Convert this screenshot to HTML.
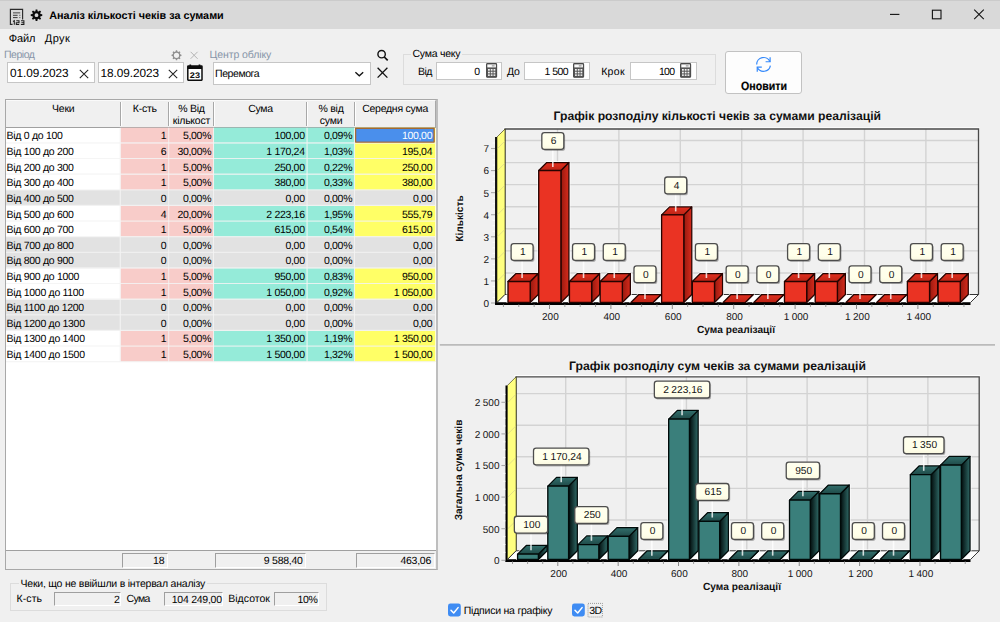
<!DOCTYPE html>
<html><head><meta charset="utf-8"><title>Аналіз кількості чеків за сумами</title>
<style>
html,body{margin:0;padding:0}
body{width:1000px;height:622px;overflow:hidden;position:relative;background:#f0f0f0;font-family:"Liberation Sans", sans-serif;font-size:10.5px;color:#000;letter-spacing:-0.25px;text-rendering:geometricPrecision}
div,span{position:absolute;box-sizing:content-box;white-space:nowrap}
text{text-rendering:geometricPrecision}
.tk{font-family:"Liberation Sans", sans-serif;font-size:10px;fill:#151515;letter-spacing:0;word-spacing:-0.35px}
.ct{font-family:"Liberation Sans", sans-serif;font-size:12.2px;font-weight:bold;fill:#111;letter-spacing:0}
.at{font-family:"Liberation Sans", sans-serif;font-size:10.3px;font-weight:bold;fill:#111;letter-spacing:0}
#tb{left:0;top:0;width:1000px;height:28.7px;background:#d9d9d9}
.c{line-height:14.8px;height:14.8px;overflow:hidden;letter-spacing:-0.3px}
.c.l{text-indent:0.6px}
.c.r{text-align:right;padding-right:2.6px;box-sizing:border-box}
.c.r6{padding-right:3.1px}
.h{top:101.6px;height:26px;text-align:center;line-height:12.4px;padding-top:1px}
.hs{top:101.5px;width:1px;height:24.5px;background:#a8a8a8;box-shadow:1px 0 0 #fff}
.lab{color:#808a94}
.fld{background:#fff;border:1px solid #c6c6c6;box-sizing:border-box}
.sunk{background:#f0f0f0;border:1px solid;border-color:#9f9f9f #fff #fff #9f9f9f;box-sizing:border-box;text-align:right}
.gb{border:1px solid #dcdcdc;box-sizing:border-box}
.gbt{background:#f0f0f0;padding:0 2px}
</style></head><body>
<div id="tb"></div>
<div style="left:0;top:0;width:1000px;height:1px;background:#cbcbcb"></div>
<!-- title icons -->
<svg style="position:absolute;left:0;top:0" width="50" height="29" viewBox="0 0 50 29">
 <path d="M12.6 24.4H10.4V9.4H22.6V19.4" fill="none" stroke="#2a2a2a" stroke-width="1.15"/>
 <path d="M13 12.8h7.2" stroke="#777" stroke-width="1.5"/>
 <path d="M13 15.3h4.6M19.4 15.3h0.9M13 17.6h4.6M19.4 17.6h0.9" stroke="#333" stroke-width="0.95"/>
 <g fill="none" stroke="#1c1c1c" stroke-width="1.05">
  <path d="M13 21.5l1.3-0.8v4.1"/>
  <path d="M16.3 20.8h2.7v1.9h-2.7v1.9h2.9"/>
  <path d="M21 20.8h2.9v3.8h-3M21.4 22.7h2.5"/>
 </g>
 <path transform="translate(36.5,15.2) rotate(0)" d="M4.06 -1.09L5.74 -0.86L5.74 0.86L4.06 1.09L3.64 2.10L4.66 3.45L3.45 4.66L2.10 3.64L1.09 4.06L0.86 5.74L-0.86 5.74L-1.09 4.06L-2.10 3.64L-3.45 4.66L-4.66 3.45L-3.64 2.10L-4.06 1.09L-5.74 0.86L-5.74 -0.86L-4.06 -1.09L-3.64 -2.10L-4.66 -3.45L-3.45 -4.66L-2.10 -3.64L-1.09 -4.06L-0.86 -5.74L0.86 -5.74L1.09 -4.06L2.10 -3.64L3.45 -4.66L4.66 -3.45L3.64 -2.10ZM1.90 0A1.90 1.90 0 1 0 -1.90 0A1.90 1.90 0 1 0 1.90 0Z" fill="#0c0c0c" fill-rule="evenodd"/>
</svg>
<span style="top:10.2px;font-size:10.8px;line-height:13px;letter-spacing:0.004px;left:49.3px;font-weight:bold;">Аналіз кількості чеків за сумами</span>
<!-- window buttons -->
<svg style="position:absolute;left:880px;top:4px" width="115" height="22" viewBox="0 0 115 22">
 <path d="M10 10.4h9.4" stroke="#111" stroke-width="1.1"/>
 <rect x="52.4" y="6.2" width="8.6" height="8.6" fill="none" stroke="#111" stroke-width="1.1"/>
 <path d="M94.2 5.6l9.6 9.6M103.8 5.6l-9.6 9.6" stroke="#111" stroke-width="1.05"/>
</svg>
<!-- menu -->
<span style="top:31.7px;font-size:11px;line-height:14px;letter-spacing:-0.111px;left:8.7px;">Файл</span>
<span style="top:31.7px;font-size:11px;line-height:14px;letter-spacing:0.436px;left:44.8px;">Друк</span>
<!-- period -->
<span style="top:49.1px;font-size:10.5px;line-height:13px;letter-spacing:-0.466px;left:4px;color:#8795a8;">Період</span>
<svg style="position:absolute;left:170px;top:49px" width="32" height="13" viewBox="0 0 32 13">
 <path transform="translate(6.5,6.3) rotate(0)" d="M3.78 -0.94L4.96 -0.61L4.96 0.61L3.78 0.94L3.34 2.01L3.94 3.08L3.08 3.94L2.01 3.34L0.94 3.78L0.61 4.96L-0.61 4.96L-0.94 3.78L-2.01 3.34L-3.08 3.94L-3.94 3.08L-3.34 2.01L-3.78 0.94L-4.96 0.61L-4.96 -0.61L-3.78 -0.94L-3.34 -2.01L-3.94 -3.08L-3.08 -3.94L-2.01 -3.34L-0.94 -3.78L-0.61 -4.96L0.61 -4.96L0.94 -3.78L2.01 -3.34L3.08 -3.94L3.94 -3.08L3.34 -2.01ZM2.60 0A2.60 2.60 0 1 0 -2.60 0A2.60 2.60 0 1 0 2.60 0Z" fill="#8f8f8f" fill-rule="evenodd"/>
 <path d="M20.6 2.8l7 7M27.6 2.8l-7 7" stroke="#b4b4b4" stroke-width="1"/>
</svg>
<div class="fld" style="left:6.6px;top:62.2px;width:88px;height:21.3px"></div>
<span style="top:66.4px;font-size:11.8px;line-height:14px;letter-spacing:-0.056px;left:10px;">01.09.2023</span>
<div class="fld" style="left:97.5px;top:62.2px;width:86.2px;height:21.3px"></div>
<span style="top:66.4px;font-size:11.8px;line-height:14px;letter-spacing:-0.056px;left:100.6px;">18.09.2023</span>
<svg style="position:absolute;left:78px;top:68px" width="102" height="12" viewBox="0 0 102 12">
 <path d="M1.8 1.8l8.4 8.4M10.2 1.8l-8.4 8.4" stroke="#222" stroke-width="1.05"/>
 <path d="M90.8 1.8l8.4 8.4M99.2 1.8l-8.4 8.4" stroke="#222" stroke-width="1.05"/>
</svg>
<!-- calendar icon -->
<svg style="position:absolute;left:186px;top:63px" width="18" height="20" viewBox="0 0 18 20">
 <rect x="1.8" y="3" width="14.2" height="14.2" rx="0.4" fill="#fff" stroke="#0d0d0d" stroke-width="1.5"/>
 <rect x="1.8" y="3" width="14.2" height="3" fill="#0d0d0d"/>
 <path d="M4.3 1.4v2M13.5 1.4v2" stroke="#0d0d0d" stroke-width="1.7"/>
 <text x="3.8" y="14.7" font-family='"Liberation Sans", sans-serif' font-size="8.1" font-weight="bold" fill="#0d0d0d" letter-spacing="0" textLength="10.2" lengthAdjust="spacingAndGlyphs" style="-webkit-text-stroke:0.2px #000">23</text>
</svg>
<!-- centre -->
<span style="top:49.1px;font-size:10.5px;line-height:13px;letter-spacing:-0.098px;left:209.6px;color:#8795a8;">Центр обліку</span>
<div class="fld" style="left:212.6px;top:62px;width:158px;height:23px"></div>
<span style="top:67.9px;font-size:10.5px;line-height:13px;letter-spacing:-0.433px;left:215.1px;">Перемога</span>
<svg style="position:absolute;left:352px;top:47px" width="40" height="34" viewBox="0 0 40 34">
 <path d="M3.4 25.2l3.9 3.6 3.9-3.6" fill="none" stroke="#111" stroke-width="1.3"/>
 <circle cx="29.6" cy="7.2" r="3.7" fill="none" stroke="#111" stroke-width="1.4"/>
 <path d="M32.3 10l3.4 3.4" stroke="#111" stroke-width="1.7"/>
 <path d="M25.6 20.8l9.8 9.8M35.4 20.8l-9.8 9.8" stroke="#111" stroke-width="1.3"/>
</svg>
<!-- sum group -->
<div class="gb" style="left:402.5px;top:54px;width:313.5px;height:30.5px"></div>
<span style="top:48.1px;font-size:10.5px;line-height:13px;letter-spacing:-0.251px;left:410.5px;background:#f0f0f0;padding:0 2px;">Сума чеку</span>
<span style="top:65.5px;font-size:10.5px;line-height:13px;letter-spacing:-0.488px;left:418px;">Від</span>
<div class="fld" style="left:436.4px;top:61.6px;width:66px;height:18px"></div>
<span style="top:65.5px;font-size:10.5px;line-height:13px;letter-spacing:0.000px;right:519.8px;">0</span>
<span style="top:65.5px;font-size:10.5px;line-height:13px;letter-spacing:-0.234px;left:507px;">До</span>
<div class="fld" style="left:524px;top:61.6px;width:66.4px;height:18px"></div>
<span style="top:65.5px;font-size:10.5px;line-height:13px;letter-spacing:-0.495px;right:431.8px;">1 500</span>
<span style="top:65.5px;font-size:10.5px;line-height:13px;letter-spacing:0.303px;left:601.2px;">Крок</span>
<div class="fld" style="left:630px;top:61.6px;width:66.7px;height:18px"></div>
<span style="top:65.5px;font-size:10.5px;line-height:13px;letter-spacing:-0.773px;right:325.8px;">100</span>

<svg style="position:absolute;left:485.5px;top:62.8px" width="12" height="16"><g><rect x="0.6" y="0.6" width="10" height="13.6" rx="0.8" fill="#555" stroke="#4a4a4a" stroke-width="1.1"/>
 <rect x="1.3" y="1.4" width="8.6" height="3" fill="#fbfbfb"/>
 <path d="M5.8 2.9h2.8" stroke="#666" stroke-width="0.8"/>
 <g fill="#f2f2f2">
 <rect x="2" y="6" width="1.8" height="1.7"/><rect x="4.75" y="6" width="1.8" height="1.7"/><rect x="7.5" y="6" width="1.8" height="1.7"/>
 <rect x="2" y="8.7" width="1.8" height="1.7"/><rect x="4.75" y="8.7" width="1.8" height="1.7"/><rect x="7.5" y="8.7" width="1.8" height="1.7"/>
 <rect x="2" y="11.4" width="1.8" height="1.5"/><rect x="4.75" y="11.4" width="1.8" height="1.5"/><rect x="7.5" y="11.4" width="1.8" height="1.5"/>
 </g></g></svg>
<svg style="position:absolute;left:573px;top:62.8px" width="12" height="16"><g><rect x="0.6" y="0.6" width="10" height="13.6" rx="0.8" fill="#555" stroke="#4a4a4a" stroke-width="1.1"/>
 <rect x="1.3" y="1.4" width="8.6" height="3" fill="#fbfbfb"/>
 <path d="M5.8 2.9h2.8" stroke="#666" stroke-width="0.8"/>
 <g fill="#f2f2f2">
 <rect x="2" y="6" width="1.8" height="1.7"/><rect x="4.75" y="6" width="1.8" height="1.7"/><rect x="7.5" y="6" width="1.8" height="1.7"/>
 <rect x="2" y="8.7" width="1.8" height="1.7"/><rect x="4.75" y="8.7" width="1.8" height="1.7"/><rect x="7.5" y="8.7" width="1.8" height="1.7"/>
 <rect x="2" y="11.4" width="1.8" height="1.5"/><rect x="4.75" y="11.4" width="1.8" height="1.5"/><rect x="7.5" y="11.4" width="1.8" height="1.5"/>
 </g></g></svg>
<svg style="position:absolute;left:679.6px;top:62.8px" width="12" height="16"><g><rect x="0.6" y="0.6" width="10" height="13.6" rx="0.8" fill="#555" stroke="#4a4a4a" stroke-width="1.1"/>
 <rect x="1.3" y="1.4" width="8.6" height="3" fill="#fbfbfb"/>
 <path d="M5.8 2.9h2.8" stroke="#666" stroke-width="0.8"/>
 <g fill="#f2f2f2">
 <rect x="2" y="6" width="1.8" height="1.7"/><rect x="4.75" y="6" width="1.8" height="1.7"/><rect x="7.5" y="6" width="1.8" height="1.7"/>
 <rect x="2" y="8.7" width="1.8" height="1.7"/><rect x="4.75" y="8.7" width="1.8" height="1.7"/><rect x="7.5" y="8.7" width="1.8" height="1.7"/>
 <rect x="2" y="11.4" width="1.8" height="1.5"/><rect x="4.75" y="11.4" width="1.8" height="1.5"/><rect x="7.5" y="11.4" width="1.8" height="1.5"/>
 </g></g></svg>
<!-- button -->
<div style="left:725.3px;top:51.3px;width:76.3px;height:42.6px;background:#fdfdfd;border:1px solid #c2c2c2;border-radius:3px;box-sizing:border-box"></div>
<svg style="position:absolute;left:754px;top:55px" width="20" height="20" viewBox="0 0 20 20">
 <g fill="none" stroke="#3489fb" stroke-width="1.2" stroke-linecap="butt" stroke-linejoin="miter">
  <path d="M2.7 9.6A6.9 6.9 0 0 1 15.95 6.7"/>
  <path d="M16.1 2.3V6.75H11.6"/>
  <path d="M16.4 10.6A6.9 6.9 0 0 1 3.3 12.2"/>
  <path d="M3.25 16.7V12.2H7.8"/>
 </g>
</svg>
<span style="top:78.9px;font-size:12px;line-height:14px;letter-spacing:0.000px;left:741px;font-weight:bold;transform:scaleX(0.885);transform-origin:0 0;-webkit-text-stroke:0.2px #000;">Оновити</span>

<!-- grid -->
<div style="left:5px;top:99.3px;width:433.4px;height:470.4px;background:#fff;border:1px solid #a8a8a8;border-right:2px solid #bebebe;box-sizing:border-box"></div>
<div style="left:6px;top:100.3px;width:429.4px;height:25.6px;background:#f0f0f0;border-top:1px solid #fafafa;border-bottom:1px solid #a0a0a0;border-right:1px solid #a8a8a8"></div>
<div class="h" style="left:6px;width:114.5px">Чеки</div>
<div class="h" style="left:120.5px;width:48.5px">К-сть</div>
<div class="hs" style="left:119.5px"></div>
<div class="h" style="left:169px;width:44.8px">% Від<br>кількост</div>
<div class="hs" style="left:168px"></div>
<div class="h" style="left:213.8px;width:93.5px">Сума</div>
<div class="hs" style="left:212.8px"></div>
<div class="h" style="left:307.3px;width:47.5px">% від<br>суми</div>
<div class="hs" style="left:306.3px"></div>
<div class="h" style="left:354.8px;width:80.5px">Середня сума</div>
<div class="hs" style="left:353.8px"></div>
<svg style="position:absolute;left:0;top:0" width="440" height="380" viewBox="0 0 440 380">
<rect x="120.5" y="127.7" width="48.5" height="15.62" fill="#f8ccc9"/>
<rect x="169" y="127.7" width="44.8" height="15.62" fill="#f8ccc9"/>
<rect x="213.8" y="127.7" width="93.5" height="15.62" fill="#95ebd9"/>
<rect x="307.3" y="127.7" width="47.5" height="15.62" fill="#95ebd9"/>
<rect x="354.8" y="127.7" width="80.5" height="15.62" fill="#ffff66"/>
<rect x="355.7" y="128.4" width="78.3" height="13.72" fill="#4a8fec" stroke="#a9672b" stroke-width="1.05"/>
<rect x="120.5" y="143.32" width="48.5" height="15.62" fill="#f8ccc9"/>
<rect x="169" y="143.32" width="44.8" height="15.62" fill="#f8ccc9"/>
<rect x="213.8" y="143.32" width="93.5" height="15.62" fill="#95ebd9"/>
<rect x="307.3" y="143.32" width="47.5" height="15.62" fill="#95ebd9"/>
<rect x="354.8" y="143.32" width="80.5" height="15.62" fill="#ffff66"/>
<rect x="120.5" y="158.94" width="48.5" height="15.62" fill="#f8ccc9"/>
<rect x="169" y="158.94" width="44.8" height="15.62" fill="#f8ccc9"/>
<rect x="213.8" y="158.94" width="93.5" height="15.62" fill="#95ebd9"/>
<rect x="307.3" y="158.94" width="47.5" height="15.62" fill="#95ebd9"/>
<rect x="354.8" y="158.94" width="80.5" height="15.62" fill="#ffff66"/>
<rect x="120.5" y="174.56" width="48.5" height="15.62" fill="#f8ccc9"/>
<rect x="169" y="174.56" width="44.8" height="15.62" fill="#f8ccc9"/>
<rect x="213.8" y="174.56" width="93.5" height="15.62" fill="#95ebd9"/>
<rect x="307.3" y="174.56" width="47.5" height="15.62" fill="#95ebd9"/>
<rect x="354.8" y="174.56" width="80.5" height="15.62" fill="#ffff66"/>
<rect x="6" y="190.18" width="114.5" height="15.62" fill="#e2e2e2"/>
<rect x="120.5" y="190.18" width="48.5" height="15.62" fill="#e2e2e2"/>
<rect x="169" y="190.18" width="44.8" height="15.62" fill="#e2e2e2"/>
<rect x="213.8" y="190.18" width="93.5" height="15.62" fill="#e2e2e2"/>
<rect x="307.3" y="190.18" width="47.5" height="15.62" fill="#e2e2e2"/>
<rect x="354.8" y="190.18" width="80.5" height="15.62" fill="#e2e2e2"/>
<rect x="120.5" y="205.8" width="48.5" height="15.62" fill="#f8ccc9"/>
<rect x="169" y="205.8" width="44.8" height="15.62" fill="#f8ccc9"/>
<rect x="213.8" y="205.8" width="93.5" height="15.62" fill="#95ebd9"/>
<rect x="307.3" y="205.8" width="47.5" height="15.62" fill="#95ebd9"/>
<rect x="354.8" y="205.8" width="80.5" height="15.62" fill="#ffff66"/>
<rect x="120.5" y="221.42" width="48.5" height="15.62" fill="#f8ccc9"/>
<rect x="169" y="221.42" width="44.8" height="15.62" fill="#f8ccc9"/>
<rect x="213.8" y="221.42" width="93.5" height="15.62" fill="#95ebd9"/>
<rect x="307.3" y="221.42" width="47.5" height="15.62" fill="#95ebd9"/>
<rect x="354.8" y="221.42" width="80.5" height="15.62" fill="#ffff66"/>
<rect x="6" y="237.04" width="114.5" height="15.62" fill="#e2e2e2"/>
<rect x="120.5" y="237.04" width="48.5" height="15.62" fill="#e2e2e2"/>
<rect x="169" y="237.04" width="44.8" height="15.62" fill="#e2e2e2"/>
<rect x="213.8" y="237.04" width="93.5" height="15.62" fill="#e2e2e2"/>
<rect x="307.3" y="237.04" width="47.5" height="15.62" fill="#e2e2e2"/>
<rect x="354.8" y="237.04" width="80.5" height="15.62" fill="#e2e2e2"/>
<rect x="6" y="252.66" width="114.5" height="15.62" fill="#e2e2e2"/>
<rect x="120.5" y="252.66" width="48.5" height="15.62" fill="#e2e2e2"/>
<rect x="169" y="252.66" width="44.8" height="15.62" fill="#e2e2e2"/>
<rect x="213.8" y="252.66" width="93.5" height="15.62" fill="#e2e2e2"/>
<rect x="307.3" y="252.66" width="47.5" height="15.62" fill="#e2e2e2"/>
<rect x="354.8" y="252.66" width="80.5" height="15.62" fill="#e2e2e2"/>
<rect x="120.5" y="268.28" width="48.5" height="15.62" fill="#f8ccc9"/>
<rect x="169" y="268.28" width="44.8" height="15.62" fill="#f8ccc9"/>
<rect x="213.8" y="268.28" width="93.5" height="15.62" fill="#95ebd9"/>
<rect x="307.3" y="268.28" width="47.5" height="15.62" fill="#95ebd9"/>
<rect x="354.8" y="268.28" width="80.5" height="15.62" fill="#ffff66"/>
<rect x="120.5" y="283.9" width="48.5" height="15.62" fill="#f8ccc9"/>
<rect x="169" y="283.9" width="44.8" height="15.62" fill="#f8ccc9"/>
<rect x="213.8" y="283.9" width="93.5" height="15.62" fill="#95ebd9"/>
<rect x="307.3" y="283.9" width="47.5" height="15.62" fill="#95ebd9"/>
<rect x="354.8" y="283.9" width="80.5" height="15.62" fill="#ffff66"/>
<rect x="6" y="299.52" width="114.5" height="15.62" fill="#e2e2e2"/>
<rect x="120.5" y="299.52" width="48.5" height="15.62" fill="#e2e2e2"/>
<rect x="169" y="299.52" width="44.8" height="15.62" fill="#e2e2e2"/>
<rect x="213.8" y="299.52" width="93.5" height="15.62" fill="#e2e2e2"/>
<rect x="307.3" y="299.52" width="47.5" height="15.62" fill="#e2e2e2"/>
<rect x="354.8" y="299.52" width="80.5" height="15.62" fill="#e2e2e2"/>
<rect x="6" y="315.14" width="114.5" height="15.62" fill="#e2e2e2"/>
<rect x="120.5" y="315.14" width="48.5" height="15.62" fill="#e2e2e2"/>
<rect x="169" y="315.14" width="44.8" height="15.62" fill="#e2e2e2"/>
<rect x="213.8" y="315.14" width="93.5" height="15.62" fill="#e2e2e2"/>
<rect x="307.3" y="315.14" width="47.5" height="15.62" fill="#e2e2e2"/>
<rect x="354.8" y="315.14" width="80.5" height="15.62" fill="#e2e2e2"/>
<rect x="120.5" y="330.76" width="48.5" height="15.62" fill="#f8ccc9"/>
<rect x="169" y="330.76" width="44.8" height="15.62" fill="#f8ccc9"/>
<rect x="213.8" y="330.76" width="93.5" height="15.62" fill="#95ebd9"/>
<rect x="307.3" y="330.76" width="47.5" height="15.62" fill="#95ebd9"/>
<rect x="354.8" y="330.76" width="80.5" height="15.62" fill="#ffff66"/>
<rect x="120.5" y="346.38" width="48.5" height="15.62" fill="#f8ccc9"/>
<rect x="169" y="346.38" width="44.8" height="15.62" fill="#f8ccc9"/>
<rect x="213.8" y="346.38" width="93.5" height="15.62" fill="#95ebd9"/>
<rect x="307.3" y="346.38" width="47.5" height="15.62" fill="#95ebd9"/>
<rect x="354.8" y="346.38" width="80.5" height="15.62" fill="#ffff66"/>
<line x1="6" y1="142.92" x2="435.3" y2="142.92" stroke="#f4f4f4" stroke-width="1.1" opacity="0.85"/>
<line x1="6" y1="158.54" x2="435.3" y2="158.54" stroke="#f4f4f4" stroke-width="1.1" opacity="0.85"/>
<line x1="6" y1="174.16" x2="435.3" y2="174.16" stroke="#f4f4f4" stroke-width="1.1" opacity="0.85"/>
<line x1="6" y1="189.78" x2="435.3" y2="189.78" stroke="#f4f4f4" stroke-width="1.1" opacity="0.85"/>
<line x1="6" y1="205.4" x2="435.3" y2="205.4" stroke="#f4f4f4" stroke-width="1.1" opacity="0.85"/>
<line x1="6" y1="221.02" x2="435.3" y2="221.02" stroke="#f4f4f4" stroke-width="1.1" opacity="0.85"/>
<line x1="6" y1="236.64" x2="435.3" y2="236.64" stroke="#f4f4f4" stroke-width="1.1" opacity="0.85"/>
<line x1="6" y1="252.26" x2="435.3" y2="252.26" stroke="#f4f4f4" stroke-width="1.1" opacity="0.85"/>
<line x1="6" y1="267.88" x2="435.3" y2="267.88" stroke="#f4f4f4" stroke-width="1.1" opacity="0.85"/>
<line x1="6" y1="283.5" x2="435.3" y2="283.5" stroke="#f4f4f4" stroke-width="1.1" opacity="0.85"/>
<line x1="6" y1="299.12" x2="435.3" y2="299.12" stroke="#f4f4f4" stroke-width="1.1" opacity="0.85"/>
<line x1="6" y1="314.74" x2="435.3" y2="314.74" stroke="#f4f4f4" stroke-width="1.1" opacity="0.85"/>
<line x1="6" y1="330.36" x2="435.3" y2="330.36" stroke="#f4f4f4" stroke-width="1.1" opacity="0.85"/>
<line x1="6" y1="345.98" x2="435.3" y2="345.98" stroke="#f4f4f4" stroke-width="1.1" opacity="0.85"/>
<line x1="6" y1="361.6" x2="435.3" y2="361.6" stroke="#f4f4f4" stroke-width="1.1" opacity="0.85"/>
<line x1="120.2" y1="127.7" x2="120.2" y2="362" stroke="#f4f4f4" stroke-width="1.1" opacity="0.85"/>
<line x1="168.7" y1="127.7" x2="168.7" y2="362" stroke="#f4f4f4" stroke-width="1.1" opacity="0.85"/>
<line x1="213.5" y1="127.7" x2="213.5" y2="362" stroke="#f4f4f4" stroke-width="1.1" opacity="0.85"/>
<line x1="307" y1="127.7" x2="307" y2="362" stroke="#f4f4f4" stroke-width="1.1" opacity="0.85"/>
<line x1="354.5" y1="127.7" x2="354.5" y2="362" stroke="#f4f4f4" stroke-width="1.1" opacity="0.85"/>
<rect x="355.7" y="128.4" width="78.3" height="13.72" fill="#4a8fec" stroke="#a9672b" stroke-width="1.05"/>
</svg>
<div class="c l" style="left:6px;top:129.4px;width:114.5px;">Від 0 до 100</div>
<div class="c r" style="left:120.5px;top:129.4px;width:48.5px;">1</div>
<div class="c r" style="left:169px;top:129.4px;width:44.8px;">5,00%</div>
<div class="c r" style="left:213.8px;top:129.4px;width:93.5px;">100,00</div>
<div class="c r" style="left:307.3px;top:129.4px;width:47.5px;">0,09%</div>
<div class="c r r6" style="left:354.8px;top:129.4px;width:80.5px;color:#fff;">100,00</div>
<div class="c l" style="left:6px;top:145.02px;width:114.5px;">Від 100 до 200</div>
<div class="c r" style="left:120.5px;top:145.02px;width:48.5px;">6</div>
<div class="c r" style="left:169px;top:145.02px;width:44.8px;">30,00%</div>
<div class="c r" style="left:213.8px;top:145.02px;width:93.5px;">1 170,24</div>
<div class="c r" style="left:307.3px;top:145.02px;width:47.5px;">1,03%</div>
<div class="c r r6" style="left:354.8px;top:145.02px;width:80.5px;">195,04</div>
<div class="c l" style="left:6px;top:160.64px;width:114.5px;">Від 200 до 300</div>
<div class="c r" style="left:120.5px;top:160.64px;width:48.5px;">1</div>
<div class="c r" style="left:169px;top:160.64px;width:44.8px;">5,00%</div>
<div class="c r" style="left:213.8px;top:160.64px;width:93.5px;">250,00</div>
<div class="c r" style="left:307.3px;top:160.64px;width:47.5px;">0,22%</div>
<div class="c r r6" style="left:354.8px;top:160.64px;width:80.5px;">250,00</div>
<div class="c l" style="left:6px;top:176.26px;width:114.5px;">Від 300 до 400</div>
<div class="c r" style="left:120.5px;top:176.26px;width:48.5px;">1</div>
<div class="c r" style="left:169px;top:176.26px;width:44.8px;">5,00%</div>
<div class="c r" style="left:213.8px;top:176.26px;width:93.5px;">380,00</div>
<div class="c r" style="left:307.3px;top:176.26px;width:47.5px;">0,33%</div>
<div class="c r r6" style="left:354.8px;top:176.26px;width:80.5px;">380,00</div>
<div class="c l" style="left:6px;top:191.88px;width:114.5px;">Від 400 до 500</div>
<div class="c r" style="left:120.5px;top:191.88px;width:48.5px;">0</div>
<div class="c r" style="left:169px;top:191.88px;width:44.8px;">0,00%</div>
<div class="c r" style="left:213.8px;top:191.88px;width:93.5px;">0,00</div>
<div class="c r" style="left:307.3px;top:191.88px;width:47.5px;">0,00%</div>
<div class="c r r6" style="left:354.8px;top:191.88px;width:80.5px;">0,00</div>
<div class="c l" style="left:6px;top:207.5px;width:114.5px;">Від 500 до 600</div>
<div class="c r" style="left:120.5px;top:207.5px;width:48.5px;">4</div>
<div class="c r" style="left:169px;top:207.5px;width:44.8px;">20,00%</div>
<div class="c r" style="left:213.8px;top:207.5px;width:93.5px;">2 223,16</div>
<div class="c r" style="left:307.3px;top:207.5px;width:47.5px;">1,95%</div>
<div class="c r r6" style="left:354.8px;top:207.5px;width:80.5px;">555,79</div>
<div class="c l" style="left:6px;top:223.12px;width:114.5px;">Від 600 до 700</div>
<div class="c r" style="left:120.5px;top:223.12px;width:48.5px;">1</div>
<div class="c r" style="left:169px;top:223.12px;width:44.8px;">5,00%</div>
<div class="c r" style="left:213.8px;top:223.12px;width:93.5px;">615,00</div>
<div class="c r" style="left:307.3px;top:223.12px;width:47.5px;">0,54%</div>
<div class="c r r6" style="left:354.8px;top:223.12px;width:80.5px;">615,00</div>
<div class="c l" style="left:6px;top:238.74px;width:114.5px;">Від 700 до 800</div>
<div class="c r" style="left:120.5px;top:238.74px;width:48.5px;">0</div>
<div class="c r" style="left:169px;top:238.74px;width:44.8px;">0,00%</div>
<div class="c r" style="left:213.8px;top:238.74px;width:93.5px;">0,00</div>
<div class="c r" style="left:307.3px;top:238.74px;width:47.5px;">0,00%</div>
<div class="c r r6" style="left:354.8px;top:238.74px;width:80.5px;">0,00</div>
<div class="c l" style="left:6px;top:254.36px;width:114.5px;">Від 800 до 900</div>
<div class="c r" style="left:120.5px;top:254.36px;width:48.5px;">0</div>
<div class="c r" style="left:169px;top:254.36px;width:44.8px;">0,00%</div>
<div class="c r" style="left:213.8px;top:254.36px;width:93.5px;">0,00</div>
<div class="c r" style="left:307.3px;top:254.36px;width:47.5px;">0,00%</div>
<div class="c r r6" style="left:354.8px;top:254.36px;width:80.5px;">0,00</div>
<div class="c l" style="left:6px;top:269.98px;width:114.5px;">Від 900 до 1000</div>
<div class="c r" style="left:120.5px;top:269.98px;width:48.5px;">1</div>
<div class="c r" style="left:169px;top:269.98px;width:44.8px;">5,00%</div>
<div class="c r" style="left:213.8px;top:269.98px;width:93.5px;">950,00</div>
<div class="c r" style="left:307.3px;top:269.98px;width:47.5px;">0,83%</div>
<div class="c r r6" style="left:354.8px;top:269.98px;width:80.5px;">950,00</div>
<div class="c l" style="left:6px;top:285.6px;width:114.5px;">Від 1000 до 1100</div>
<div class="c r" style="left:120.5px;top:285.6px;width:48.5px;">1</div>
<div class="c r" style="left:169px;top:285.6px;width:44.8px;">5,00%</div>
<div class="c r" style="left:213.8px;top:285.6px;width:93.5px;">1 050,00</div>
<div class="c r" style="left:307.3px;top:285.6px;width:47.5px;">0,92%</div>
<div class="c r r6" style="left:354.8px;top:285.6px;width:80.5px;">1 050,00</div>
<div class="c l" style="left:6px;top:301.22px;width:114.5px;">Від 1100 до 1200</div>
<div class="c r" style="left:120.5px;top:301.22px;width:48.5px;">0</div>
<div class="c r" style="left:169px;top:301.22px;width:44.8px;">0,00%</div>
<div class="c r" style="left:213.8px;top:301.22px;width:93.5px;">0,00</div>
<div class="c r" style="left:307.3px;top:301.22px;width:47.5px;">0,00%</div>
<div class="c r r6" style="left:354.8px;top:301.22px;width:80.5px;">0,00</div>
<div class="c l" style="left:6px;top:316.84px;width:114.5px;">Від 1200 до 1300</div>
<div class="c r" style="left:120.5px;top:316.84px;width:48.5px;">0</div>
<div class="c r" style="left:169px;top:316.84px;width:44.8px;">0,00%</div>
<div class="c r" style="left:213.8px;top:316.84px;width:93.5px;">0,00</div>
<div class="c r" style="left:307.3px;top:316.84px;width:47.5px;">0,00%</div>
<div class="c r r6" style="left:354.8px;top:316.84px;width:80.5px;">0,00</div>
<div class="c l" style="left:6px;top:332.46px;width:114.5px;">Від 1300 до 1400</div>
<div class="c r" style="left:120.5px;top:332.46px;width:48.5px;">1</div>
<div class="c r" style="left:169px;top:332.46px;width:44.8px;">5,00%</div>
<div class="c r" style="left:213.8px;top:332.46px;width:93.5px;">1 350,00</div>
<div class="c r" style="left:307.3px;top:332.46px;width:47.5px;">1,19%</div>
<div class="c r r6" style="left:354.8px;top:332.46px;width:80.5px;">1 350,00</div>
<div class="c l" style="left:6px;top:348.08px;width:114.5px;">Від 1400 до 1500</div>
<div class="c r" style="left:120.5px;top:348.08px;width:48.5px;">1</div>
<div class="c r" style="left:169px;top:348.08px;width:44.8px;">5,00%</div>
<div class="c r" style="left:213.8px;top:348.08px;width:93.5px;">1 500,00</div>
<div class="c r" style="left:307.3px;top:348.08px;width:47.5px;">1,32%</div>
<div class="c r r6" style="left:354.8px;top:348.08px;width:80.5px;">1 500,00</div>
<!-- footer -->
<div style="left:6px;top:549.8px;width:430.4px;height:18px;background:#f0f0f0;border-top:1px solid #a0a0a0"></div>
<div class="sunk" style="left:122px;top:553.4px;width:46.3px;height:14.8px;line-height:15.6px;padding-right:3px">18</div>
<div class="sunk" style="left:215px;top:553.4px;width:91.3px;height:14.8px;line-height:15.6px;padding-right:2.6px">9 588,40</div>
<div class="sunk" style="left:356px;top:553.4px;width:78.6px;height:14.8px;line-height:15.6px;padding-right:2.6px">463,06</div>
<!-- bottom group -->
<div class="gb" style="left:10.3px;top:583.3px;width:317px;height:27.4px"></div>
<span style="top:577.9px;font-size:10.5px;line-height:13px;letter-spacing:-0.223px;left:18.5px;background:#f0f0f0;padding:0 2px;">Чеки, що не ввійшли в інтервал аналізу</span>
<span style="top:592.6px;font-size:10.5px;line-height:13px;letter-spacing:0.131px;left:16.4px;">К-сть</span>
<div class="sunk" style="left:54px;top:591.6px;width:67px;height:14.6px;line-height:14.2px;padding-right:0.5px">2</div>
<span style="top:592.6px;font-size:10.5px;line-height:13px;letter-spacing:-0.618px;left:126.5px;">Сума</span>
<div class="sunk" style="left:164.3px;top:591.6px;width:59px;height:14.6px;line-height:14.2px;padding-right:0.5px">104 249,00</div>
<span style="top:592.6px;font-size:10.5px;line-height:13px;letter-spacing:0.029px;left:228.2px;">Відсоток</span>
<div class="sunk" style="left:273.7px;top:591.6px;width:45.5px;height:14.6px;line-height:14.2px;padding-right:0.5px">10%</div>
<!-- splitters -->
<svg style="position:absolute;left:0;top:340px" width="1000" height="10"><line x1="439.8" y1="4.9" x2="995" y2="4.9" stroke="#bbbbbb" stroke-width="1.7"/></svg>
<svg id="charts" width="1000" height="622" viewBox="0 0 1000 622" style="position:absolute;left:0;top:0">
<defs>
<linearGradient id="lbl" x1="0" y1="0" x2="0" y2="1"><stop offset="0" stop-color="#ffffee"/><stop offset="0.7" stop-color="#ffffea"/><stop offset="1" stop-color="#faf8e0"/></linearGradient>
<linearGradient id="c1s" x1="0" y1="0" x2="1" y2="0"><stop offset="0" stop-color="#98190f"/><stop offset="1" stop-color="#d62b1c"/></linearGradient>
<linearGradient id="c1t" x1="0" y1="0" x2="0" y2="1"><stop offset="0" stop-color="#e32f1f"/><stop offset="1" stop-color="#bb2416"/></linearGradient>
<linearGradient id="c2s" x1="0" y1="0" x2="1" y2="0"><stop offset="0" stop-color="#020d0d"/><stop offset="1" stop-color="#2f6966"/></linearGradient>
<linearGradient id="c2t" x1="0" y1="0" x2="0" y2="1"><stop offset="0" stop-color="#33706d"/><stop offset="1" stop-color="#1f4a48"/></linearGradient>
</defs>
<g><rect x="505" y="129" width="473.5" height="165.5" fill="#f0f0f0"/>
<line x1="505" y1="295" x2="978.5" y2="295" stroke="#d3d3d3" stroke-width="1.4"/>
<line x1="505" y1="272.93" x2="978.5" y2="272.93" stroke="#d3d3d3" stroke-width="1.4"/>
<line x1="505" y1="250.86" x2="978.5" y2="250.86" stroke="#d3d3d3" stroke-width="1.4"/>
<line x1="505" y1="228.79" x2="978.5" y2="228.79" stroke="#d3d3d3" stroke-width="1.4"/>
<line x1="505" y1="206.72" x2="978.5" y2="206.72" stroke="#d3d3d3" stroke-width="1.4"/>
<line x1="505" y1="184.65" x2="978.5" y2="184.65" stroke="#d3d3d3" stroke-width="1.4"/>
<line x1="505" y1="162.58" x2="978.5" y2="162.58" stroke="#d3d3d3" stroke-width="1.4"/>
<line x1="505" y1="140.51" x2="978.5" y2="140.51" stroke="#d3d3d3" stroke-width="1.4"/>
<line x1="557.5" y1="129" x2="557.5" y2="294.5" stroke="#d3d3d3" stroke-width="1.4"/>
<line x1="618.9" y1="129" x2="618.9" y2="294.5" stroke="#d3d3d3" stroke-width="1.4"/>
<line x1="680.3" y1="129" x2="680.3" y2="294.5" stroke="#d3d3d3" stroke-width="1.4"/>
<line x1="741.7" y1="129" x2="741.7" y2="294.5" stroke="#d3d3d3" stroke-width="1.4"/>
<line x1="803.1" y1="129" x2="803.1" y2="294.5" stroke="#d3d3d3" stroke-width="1.4"/>
<line x1="864.5" y1="129" x2="864.5" y2="294.5" stroke="#d3d3d3" stroke-width="1.4"/>
<line x1="925.9" y1="129" x2="925.9" y2="294.5" stroke="#d3d3d3" stroke-width="1.4"/>
<polyline points="504,294.5 504,127.8 979.5,127.8" fill="none" stroke="#ffffff" stroke-width="1.2" opacity="0.9"/>
<polyline points="505,294.5 505,129 978.5,129 978.5,294.5" fill="none" stroke="#4a4a4a" stroke-width="1.3"/>
<polygon points="497,302.5 505,294.5 505,129 497,137" fill="#ffff80" stroke="#2a2a00" stroke-width="0.6"/>
<line x1="497.5" y1="303" x2="504.5" y2="296" stroke="#d9d38a" stroke-width="0.7"/>
<line x1="497.5" y1="280.93" x2="504.5" y2="273.93" stroke="#d9d38a" stroke-width="0.7"/>
<line x1="497.5" y1="258.86" x2="504.5" y2="251.86" stroke="#d9d38a" stroke-width="0.7"/>
<line x1="497.5" y1="236.79" x2="504.5" y2="229.79" stroke="#d9d38a" stroke-width="0.7"/>
<line x1="497.5" y1="214.72" x2="504.5" y2="207.72" stroke="#d9d38a" stroke-width="0.7"/>
<line x1="497.5" y1="192.65" x2="504.5" y2="185.65" stroke="#d9d38a" stroke-width="0.7"/>
<line x1="497.5" y1="170.58" x2="504.5" y2="163.58" stroke="#d9d38a" stroke-width="0.7"/>
<line x1="497.5" y1="148.51" x2="504.5" y2="141.51" stroke="#d9d38a" stroke-width="0.7"/>
<polygon points="497,302.5 505,294.5 978.5,294.5 970.5,302.5" fill="#ffffff" stroke="#202020" stroke-width="0.9"/>
<polygon points="508,302.5 508,281.5 516,273.5 538.2,273.5 538.2,294.5 530.2,302.5" fill="none" stroke="#ffffff" stroke-width="3" stroke-linejoin="round" opacity="0.75"/>
<polygon points="538.72,302.5 538.72,170.5 546.72,162.5 568.92,162.5 568.92,294.5 560.92,302.5" fill="none" stroke="#ffffff" stroke-width="3" stroke-linejoin="round" opacity="0.75"/>
<polygon points="569.44,302.5 569.44,281.5 577.44,273.5 599.64,273.5 599.64,294.5 591.64,302.5" fill="none" stroke="#ffffff" stroke-width="3" stroke-linejoin="round" opacity="0.75"/>
<polygon points="600.16,302.5 600.16,281.5 608.16,273.5 630.36,273.5 630.36,294.5 622.36,302.5" fill="none" stroke="#ffffff" stroke-width="3" stroke-linejoin="round" opacity="0.75"/>
<polygon points="630.88,302.5 630.88,302.5 638.88,294.5 661.08,294.5 661.08,294.5 653.08,302.5" fill="none" stroke="#ffffff" stroke-width="3" stroke-linejoin="round" opacity="0.75"/>
<polygon points="661.6,302.5 661.6,214.9 669.6,206.9 691.8,206.9 691.8,294.5 683.8,302.5" fill="none" stroke="#ffffff" stroke-width="3" stroke-linejoin="round" opacity="0.75"/>
<polygon points="692.32,302.5 692.32,281.5 700.32,273.5 722.52,273.5 722.52,294.5 714.52,302.5" fill="none" stroke="#ffffff" stroke-width="3" stroke-linejoin="round" opacity="0.75"/>
<polygon points="723.04,302.5 723.04,302.5 731.04,294.5 753.24,294.5 753.24,294.5 745.24,302.5" fill="none" stroke="#ffffff" stroke-width="3" stroke-linejoin="round" opacity="0.75"/>
<polygon points="753.76,302.5 753.76,302.5 761.76,294.5 783.96,294.5 783.96,294.5 775.96,302.5" fill="none" stroke="#ffffff" stroke-width="3" stroke-linejoin="round" opacity="0.75"/>
<polygon points="784.48,302.5 784.48,281.5 792.48,273.5 814.68,273.5 814.68,294.5 806.68,302.5" fill="none" stroke="#ffffff" stroke-width="3" stroke-linejoin="round" opacity="0.75"/>
<polygon points="815.2,302.5 815.2,281.5 823.2,273.5 845.4,273.5 845.4,294.5 837.4,302.5" fill="none" stroke="#ffffff" stroke-width="3" stroke-linejoin="round" opacity="0.75"/>
<polygon points="845.92,302.5 845.92,302.5 853.92,294.5 876.12,294.5 876.12,294.5 868.12,302.5" fill="none" stroke="#ffffff" stroke-width="3" stroke-linejoin="round" opacity="0.75"/>
<polygon points="876.64,302.5 876.64,302.5 884.64,294.5 906.84,294.5 906.84,294.5 898.84,302.5" fill="none" stroke="#ffffff" stroke-width="3" stroke-linejoin="round" opacity="0.75"/>
<polygon points="907.36,302.5 907.36,281.5 915.36,273.5 937.56,273.5 937.56,294.5 929.56,302.5" fill="none" stroke="#ffffff" stroke-width="3" stroke-linejoin="round" opacity="0.75"/>
<polygon points="938.08,302.5 938.08,281.5 946.08,273.5 968.28,273.5 968.28,294.5 960.28,302.5" fill="none" stroke="#ffffff" stroke-width="3" stroke-linejoin="round" opacity="0.75"/>
<polygon points="530.2,281.5 538.2,273.5 538.2,294.5 530.2,302.5" fill="url(#c1s)" stroke="#260300" stroke-width="1.25" stroke-linejoin="round"/>
<polygon points="508,281.5 516,273.5 538.2,273.5 530.2,281.5" fill="url(#c1t)" stroke="#260300" stroke-width="1.25" stroke-linejoin="round"/>
<rect x="508" y="281.5" width="22.2" height="21" fill="#ea3323" stroke="#260300" stroke-width="1.35" stroke-linejoin="round"/>
<polygon points="560.92,170.5 568.92,162.5 568.92,294.5 560.92,302.5" fill="url(#c1s)" stroke="#260300" stroke-width="1.25" stroke-linejoin="round"/>
<polygon points="538.72,170.5 546.72,162.5 568.92,162.5 560.92,170.5" fill="url(#c1t)" stroke="#260300" stroke-width="1.25" stroke-linejoin="round"/>
<rect x="538.72" y="170.5" width="22.2" height="132" fill="#ea3323" stroke="#260300" stroke-width="1.35" stroke-linejoin="round"/>
<polygon points="591.64,281.5 599.64,273.5 599.64,294.5 591.64,302.5" fill="url(#c1s)" stroke="#260300" stroke-width="1.25" stroke-linejoin="round"/>
<polygon points="569.44,281.5 577.44,273.5 599.64,273.5 591.64,281.5" fill="url(#c1t)" stroke="#260300" stroke-width="1.25" stroke-linejoin="round"/>
<rect x="569.44" y="281.5" width="22.2" height="21" fill="#ea3323" stroke="#260300" stroke-width="1.35" stroke-linejoin="round"/>
<polygon points="622.36,281.5 630.36,273.5 630.36,294.5 622.36,302.5" fill="url(#c1s)" stroke="#260300" stroke-width="1.25" stroke-linejoin="round"/>
<polygon points="600.16,281.5 608.16,273.5 630.36,273.5 622.36,281.5" fill="url(#c1t)" stroke="#260300" stroke-width="1.25" stroke-linejoin="round"/>
<rect x="600.16" y="281.5" width="22.2" height="21" fill="#ea3323" stroke="#260300" stroke-width="1.35" stroke-linejoin="round"/>
<polygon points="653.08,302.5 661.08,294.5 661.08,294.5 653.08,302.5" fill="url(#c1s)" stroke="#260300" stroke-width="1.25" stroke-linejoin="round"/>
<polygon points="630.88,302.5 638.88,294.5 661.08,294.5 653.08,302.5" fill="url(#c1t)" stroke="#260300" stroke-width="1.25" stroke-linejoin="round"/>
<polygon points="683.8,214.9 691.8,206.9 691.8,294.5 683.8,302.5" fill="url(#c1s)" stroke="#260300" stroke-width="1.25" stroke-linejoin="round"/>
<polygon points="661.6,214.9 669.6,206.9 691.8,206.9 683.8,214.9" fill="url(#c1t)" stroke="#260300" stroke-width="1.25" stroke-linejoin="round"/>
<rect x="661.6" y="214.9" width="22.2" height="87.6" fill="#ea3323" stroke="#260300" stroke-width="1.35" stroke-linejoin="round"/>
<polygon points="714.52,281.5 722.52,273.5 722.52,294.5 714.52,302.5" fill="url(#c1s)" stroke="#260300" stroke-width="1.25" stroke-linejoin="round"/>
<polygon points="692.32,281.5 700.32,273.5 722.52,273.5 714.52,281.5" fill="url(#c1t)" stroke="#260300" stroke-width="1.25" stroke-linejoin="round"/>
<rect x="692.32" y="281.5" width="22.2" height="21" fill="#ea3323" stroke="#260300" stroke-width="1.35" stroke-linejoin="round"/>
<polygon points="745.24,302.5 753.24,294.5 753.24,294.5 745.24,302.5" fill="url(#c1s)" stroke="#260300" stroke-width="1.25" stroke-linejoin="round"/>
<polygon points="723.04,302.5 731.04,294.5 753.24,294.5 745.24,302.5" fill="url(#c1t)" stroke="#260300" stroke-width="1.25" stroke-linejoin="round"/>
<polygon points="775.96,302.5 783.96,294.5 783.96,294.5 775.96,302.5" fill="url(#c1s)" stroke="#260300" stroke-width="1.25" stroke-linejoin="round"/>
<polygon points="753.76,302.5 761.76,294.5 783.96,294.5 775.96,302.5" fill="url(#c1t)" stroke="#260300" stroke-width="1.25" stroke-linejoin="round"/>
<polygon points="806.68,281.5 814.68,273.5 814.68,294.5 806.68,302.5" fill="url(#c1s)" stroke="#260300" stroke-width="1.25" stroke-linejoin="round"/>
<polygon points="784.48,281.5 792.48,273.5 814.68,273.5 806.68,281.5" fill="url(#c1t)" stroke="#260300" stroke-width="1.25" stroke-linejoin="round"/>
<rect x="784.48" y="281.5" width="22.2" height="21" fill="#ea3323" stroke="#260300" stroke-width="1.35" stroke-linejoin="round"/>
<polygon points="837.4,281.5 845.4,273.5 845.4,294.5 837.4,302.5" fill="url(#c1s)" stroke="#260300" stroke-width="1.25" stroke-linejoin="round"/>
<polygon points="815.2,281.5 823.2,273.5 845.4,273.5 837.4,281.5" fill="url(#c1t)" stroke="#260300" stroke-width="1.25" stroke-linejoin="round"/>
<rect x="815.2" y="281.5" width="22.2" height="21" fill="#ea3323" stroke="#260300" stroke-width="1.35" stroke-linejoin="round"/>
<polygon points="868.12,302.5 876.12,294.5 876.12,294.5 868.12,302.5" fill="url(#c1s)" stroke="#260300" stroke-width="1.25" stroke-linejoin="round"/>
<polygon points="845.92,302.5 853.92,294.5 876.12,294.5 868.12,302.5" fill="url(#c1t)" stroke="#260300" stroke-width="1.25" stroke-linejoin="round"/>
<polygon points="898.84,302.5 906.84,294.5 906.84,294.5 898.84,302.5" fill="url(#c1s)" stroke="#260300" stroke-width="1.25" stroke-linejoin="round"/>
<polygon points="876.64,302.5 884.64,294.5 906.84,294.5 898.84,302.5" fill="url(#c1t)" stroke="#260300" stroke-width="1.25" stroke-linejoin="round"/>
<polygon points="929.56,281.5 937.56,273.5 937.56,294.5 929.56,302.5" fill="url(#c1s)" stroke="#260300" stroke-width="1.25" stroke-linejoin="round"/>
<polygon points="907.36,281.5 915.36,273.5 937.56,273.5 929.56,281.5" fill="url(#c1t)" stroke="#260300" stroke-width="1.25" stroke-linejoin="round"/>
<rect x="907.36" y="281.5" width="22.2" height="21" fill="#ea3323" stroke="#260300" stroke-width="1.35" stroke-linejoin="round"/>
<polygon points="960.28,281.5 968.28,273.5 968.28,294.5 960.28,302.5" fill="url(#c1s)" stroke="#260300" stroke-width="1.25" stroke-linejoin="round"/>
<polygon points="938.08,281.5 946.08,273.5 968.28,273.5 960.28,281.5" fill="url(#c1t)" stroke="#260300" stroke-width="1.25" stroke-linejoin="round"/>
<rect x="938.08" y="281.5" width="22.2" height="21" fill="#ea3323" stroke="#260300" stroke-width="1.35" stroke-linejoin="round"/>
<line x1="496" y1="137" x2="496" y2="304.8" stroke="#000" stroke-width="1.8"/>
<line x1="495.1" y1="304.05" x2="970.5" y2="304.05" stroke="#000" stroke-width="2"/>
<line x1="491" y1="303" x2="495" y2="303" stroke="#a8a8a8" stroke-width="1.1"/>
<text x="489.1" y="306.9" text-anchor="end" class="tk">0</text>
<line x1="491" y1="280.93" x2="495" y2="280.93" stroke="#a8a8a8" stroke-width="1.1"/>
<text x="489.1" y="284.83" text-anchor="end" class="tk">1</text>
<line x1="491" y1="258.86" x2="495" y2="258.86" stroke="#a8a8a8" stroke-width="1.1"/>
<text x="489.1" y="262.76" text-anchor="end" class="tk">2</text>
<line x1="491" y1="236.79" x2="495" y2="236.79" stroke="#a8a8a8" stroke-width="1.1"/>
<text x="489.1" y="240.69" text-anchor="end" class="tk">3</text>
<line x1="491" y1="214.72" x2="495" y2="214.72" stroke="#a8a8a8" stroke-width="1.1"/>
<text x="489.1" y="218.62" text-anchor="end" class="tk">4</text>
<line x1="491" y1="192.65" x2="495" y2="192.65" stroke="#a8a8a8" stroke-width="1.1"/>
<text x="489.1" y="196.55" text-anchor="end" class="tk">5</text>
<line x1="491" y1="170.58" x2="495" y2="170.58" stroke="#a8a8a8" stroke-width="1.1"/>
<text x="489.1" y="174.48" text-anchor="end" class="tk">6</text>
<line x1="491" y1="148.51" x2="495" y2="148.51" stroke="#a8a8a8" stroke-width="1.1"/>
<text x="489.1" y="152.41" text-anchor="end" class="tk">7</text>
<line x1="492.5" y1="297.48" x2="495" y2="297.48" stroke="#fbfbfb" stroke-width="1.1"/>
<line x1="492.5" y1="291.96" x2="495" y2="291.96" stroke="#fbfbfb" stroke-width="1.1"/>
<line x1="492.5" y1="286.45" x2="495" y2="286.45" stroke="#fbfbfb" stroke-width="1.1"/>
<line x1="492.5" y1="275.41" x2="495" y2="275.41" stroke="#fbfbfb" stroke-width="1.1"/>
<line x1="492.5" y1="269.89" x2="495" y2="269.89" stroke="#fbfbfb" stroke-width="1.1"/>
<line x1="492.5" y1="264.38" x2="495" y2="264.38" stroke="#fbfbfb" stroke-width="1.1"/>
<line x1="492.5" y1="253.34" x2="495" y2="253.34" stroke="#fbfbfb" stroke-width="1.1"/>
<line x1="492.5" y1="247.82" x2="495" y2="247.82" stroke="#fbfbfb" stroke-width="1.1"/>
<line x1="492.5" y1="242.31" x2="495" y2="242.31" stroke="#fbfbfb" stroke-width="1.1"/>
<line x1="492.5" y1="231.27" x2="495" y2="231.27" stroke="#fbfbfb" stroke-width="1.1"/>
<line x1="492.5" y1="225.75" x2="495" y2="225.75" stroke="#fbfbfb" stroke-width="1.1"/>
<line x1="492.5" y1="220.24" x2="495" y2="220.24" stroke="#fbfbfb" stroke-width="1.1"/>
<line x1="492.5" y1="209.2" x2="495" y2="209.2" stroke="#fbfbfb" stroke-width="1.1"/>
<line x1="492.5" y1="203.69" x2="495" y2="203.69" stroke="#fbfbfb" stroke-width="1.1"/>
<line x1="492.5" y1="198.17" x2="495" y2="198.17" stroke="#fbfbfb" stroke-width="1.1"/>
<line x1="492.5" y1="187.13" x2="495" y2="187.13" stroke="#fbfbfb" stroke-width="1.1"/>
<line x1="492.5" y1="181.62" x2="495" y2="181.62" stroke="#fbfbfb" stroke-width="1.1"/>
<line x1="492.5" y1="176.1" x2="495" y2="176.1" stroke="#fbfbfb" stroke-width="1.1"/>
<line x1="492.5" y1="165.06" x2="495" y2="165.06" stroke="#fbfbfb" stroke-width="1.1"/>
<line x1="492.5" y1="159.54" x2="495" y2="159.54" stroke="#fbfbfb" stroke-width="1.1"/>
<line x1="492.5" y1="154.03" x2="495" y2="154.03" stroke="#fbfbfb" stroke-width="1.1"/>
<line x1="492.5" y1="142.99" x2="495" y2="142.99" stroke="#fbfbfb" stroke-width="1.1"/>
<line x1="549.5" y1="304.5" x2="549.5" y2="309" stroke="#8a8a8a" stroke-width="1"/>
<text x="550.4" y="319.6" text-anchor="middle" class="tk">200</text>
<line x1="610.9" y1="304.5" x2="610.9" y2="309" stroke="#8a8a8a" stroke-width="1"/>
<text x="611.8" y="319.6" text-anchor="middle" class="tk">400</text>
<line x1="672.3" y1="304.5" x2="672.3" y2="309" stroke="#8a8a8a" stroke-width="1"/>
<text x="673.2" y="319.6" text-anchor="middle" class="tk">600</text>
<line x1="733.7" y1="304.5" x2="733.7" y2="309" stroke="#8a8a8a" stroke-width="1"/>
<text x="734.6" y="319.6" text-anchor="middle" class="tk">800</text>
<line x1="795.1" y1="304.5" x2="795.1" y2="309" stroke="#8a8a8a" stroke-width="1"/>
<text x="796" y="319.6" text-anchor="middle" class="tk">1 000</text>
<line x1="856.5" y1="304.5" x2="856.5" y2="309" stroke="#8a8a8a" stroke-width="1"/>
<text x="857.4" y="319.6" text-anchor="middle" class="tk">1 200</text>
<line x1="917.9" y1="304.5" x2="917.9" y2="309" stroke="#8a8a8a" stroke-width="1"/>
<text x="918.8" y="319.6" text-anchor="middle" class="tk">1 400</text>
<line x1="503.45" y1="304.5" x2="503.45" y2="307" stroke="#9a9a9a" stroke-width="1"/>
<line x1="518.8" y1="304.5" x2="518.8" y2="307" stroke="#9a9a9a" stroke-width="1"/>
<line x1="534.15" y1="304.5" x2="534.15" y2="307" stroke="#9a9a9a" stroke-width="1"/>
<line x1="564.85" y1="304.5" x2="564.85" y2="307" stroke="#9a9a9a" stroke-width="1"/>
<line x1="580.2" y1="304.5" x2="580.2" y2="307" stroke="#9a9a9a" stroke-width="1"/>
<line x1="595.55" y1="304.5" x2="595.55" y2="307" stroke="#9a9a9a" stroke-width="1"/>
<line x1="626.25" y1="304.5" x2="626.25" y2="307" stroke="#9a9a9a" stroke-width="1"/>
<line x1="641.6" y1="304.5" x2="641.6" y2="307" stroke="#9a9a9a" stroke-width="1"/>
<line x1="656.95" y1="304.5" x2="656.95" y2="307" stroke="#9a9a9a" stroke-width="1"/>
<line x1="687.65" y1="304.5" x2="687.65" y2="307" stroke="#9a9a9a" stroke-width="1"/>
<line x1="703" y1="304.5" x2="703" y2="307" stroke="#9a9a9a" stroke-width="1"/>
<line x1="718.35" y1="304.5" x2="718.35" y2="307" stroke="#9a9a9a" stroke-width="1"/>
<line x1="749.05" y1="304.5" x2="749.05" y2="307" stroke="#9a9a9a" stroke-width="1"/>
<line x1="764.4" y1="304.5" x2="764.4" y2="307" stroke="#9a9a9a" stroke-width="1"/>
<line x1="779.75" y1="304.5" x2="779.75" y2="307" stroke="#9a9a9a" stroke-width="1"/>
<line x1="810.45" y1="304.5" x2="810.45" y2="307" stroke="#9a9a9a" stroke-width="1"/>
<line x1="825.8" y1="304.5" x2="825.8" y2="307" stroke="#9a9a9a" stroke-width="1"/>
<line x1="841.15" y1="304.5" x2="841.15" y2="307" stroke="#9a9a9a" stroke-width="1"/>
<line x1="871.85" y1="304.5" x2="871.85" y2="307" stroke="#9a9a9a" stroke-width="1"/>
<line x1="887.2" y1="304.5" x2="887.2" y2="307" stroke="#9a9a9a" stroke-width="1"/>
<line x1="902.55" y1="304.5" x2="902.55" y2="307" stroke="#9a9a9a" stroke-width="1"/>
<line x1="933.25" y1="304.5" x2="933.25" y2="307" stroke="#9a9a9a" stroke-width="1"/>
<line x1="948.6" y1="304.5" x2="948.6" y2="307" stroke="#9a9a9a" stroke-width="1"/>
<line x1="963.95" y1="304.5" x2="963.95" y2="307" stroke="#9a9a9a" stroke-width="1"/>
<line x1="522.1" y1="260.4" x2="522.1" y2="278" stroke="#ffffff" stroke-width="1.6" opacity="0.8"/>
<rect x="512.4" y="245.1" width="22" height="16.8" rx="2.6" fill="#000" opacity="0.28"/>
<rect x="511.1" y="243.6" width="22" height="16.8" rx="2.6" fill="url(#lbl)" stroke="#4d4d4d" stroke-width="1.3"/>
<text x="522.9" y="255.35" text-anchor="middle" class="tk" style="font-size:10.2px">1</text>
<line x1="552.82" y1="149.4" x2="552.82" y2="167" stroke="#ffffff" stroke-width="1.6" opacity="0.8"/>
<rect x="543.12" y="134.1" width="22" height="16.8" rx="2.6" fill="#000" opacity="0.28"/>
<rect x="541.82" y="132.6" width="22" height="16.8" rx="2.6" fill="url(#lbl)" stroke="#4d4d4d" stroke-width="1.3"/>
<text x="553.62" y="144.35" text-anchor="middle" class="tk" style="font-size:10.2px">6</text>
<line x1="583.54" y1="260.4" x2="583.54" y2="278" stroke="#ffffff" stroke-width="1.6" opacity="0.8"/>
<rect x="573.84" y="245.1" width="22" height="16.8" rx="2.6" fill="#000" opacity="0.28"/>
<rect x="572.54" y="243.6" width="22" height="16.8" rx="2.6" fill="url(#lbl)" stroke="#4d4d4d" stroke-width="1.3"/>
<text x="584.34" y="255.35" text-anchor="middle" class="tk" style="font-size:10.2px">1</text>
<line x1="614.26" y1="260.4" x2="614.26" y2="278" stroke="#ffffff" stroke-width="1.6" opacity="0.8"/>
<rect x="604.56" y="245.1" width="22" height="16.8" rx="2.6" fill="#000" opacity="0.28"/>
<rect x="603.26" y="243.6" width="22" height="16.8" rx="2.6" fill="url(#lbl)" stroke="#4d4d4d" stroke-width="1.3"/>
<text x="615.06" y="255.35" text-anchor="middle" class="tk" style="font-size:10.2px">1</text>
<line x1="644.98" y1="282.6" x2="644.98" y2="299" stroke="#ffffff" stroke-width="1.6" opacity="0.8"/>
<rect x="635.28" y="267.3" width="22" height="16.8" rx="2.6" fill="#000" opacity="0.28"/>
<rect x="633.98" y="265.8" width="22" height="16.8" rx="2.6" fill="url(#lbl)" stroke="#4d4d4d" stroke-width="1.3"/>
<text x="645.78" y="277.55" text-anchor="middle" class="tk" style="font-size:10.2px">0</text>
<line x1="675.7" y1="193.8" x2="675.7" y2="211.4" stroke="#ffffff" stroke-width="1.6" opacity="0.8"/>
<rect x="666" y="178.5" width="22" height="16.8" rx="2.6" fill="#000" opacity="0.28"/>
<rect x="664.7" y="177" width="22" height="16.8" rx="2.6" fill="url(#lbl)" stroke="#4d4d4d" stroke-width="1.3"/>
<text x="676.5" y="188.75" text-anchor="middle" class="tk" style="font-size:10.2px">4</text>
<line x1="706.42" y1="260.4" x2="706.42" y2="278" stroke="#ffffff" stroke-width="1.6" opacity="0.8"/>
<rect x="696.72" y="245.1" width="22" height="16.8" rx="2.6" fill="#000" opacity="0.28"/>
<rect x="695.42" y="243.6" width="22" height="16.8" rx="2.6" fill="url(#lbl)" stroke="#4d4d4d" stroke-width="1.3"/>
<text x="707.22" y="255.35" text-anchor="middle" class="tk" style="font-size:10.2px">1</text>
<line x1="737.14" y1="282.6" x2="737.14" y2="299" stroke="#ffffff" stroke-width="1.6" opacity="0.8"/>
<rect x="727.44" y="267.3" width="22" height="16.8" rx="2.6" fill="#000" opacity="0.28"/>
<rect x="726.14" y="265.8" width="22" height="16.8" rx="2.6" fill="url(#lbl)" stroke="#4d4d4d" stroke-width="1.3"/>
<text x="737.94" y="277.55" text-anchor="middle" class="tk" style="font-size:10.2px">0</text>
<line x1="767.86" y1="282.6" x2="767.86" y2="299" stroke="#ffffff" stroke-width="1.6" opacity="0.8"/>
<rect x="758.16" y="267.3" width="22" height="16.8" rx="2.6" fill="#000" opacity="0.28"/>
<rect x="756.86" y="265.8" width="22" height="16.8" rx="2.6" fill="url(#lbl)" stroke="#4d4d4d" stroke-width="1.3"/>
<text x="768.66" y="277.55" text-anchor="middle" class="tk" style="font-size:10.2px">0</text>
<line x1="798.58" y1="260.4" x2="798.58" y2="278" stroke="#ffffff" stroke-width="1.6" opacity="0.8"/>
<rect x="788.88" y="245.1" width="22" height="16.8" rx="2.6" fill="#000" opacity="0.28"/>
<rect x="787.58" y="243.6" width="22" height="16.8" rx="2.6" fill="url(#lbl)" stroke="#4d4d4d" stroke-width="1.3"/>
<text x="799.38" y="255.35" text-anchor="middle" class="tk" style="font-size:10.2px">1</text>
<line x1="829.3" y1="260.4" x2="829.3" y2="278" stroke="#ffffff" stroke-width="1.6" opacity="0.8"/>
<rect x="819.6" y="245.1" width="22" height="16.8" rx="2.6" fill="#000" opacity="0.28"/>
<rect x="818.3" y="243.6" width="22" height="16.8" rx="2.6" fill="url(#lbl)" stroke="#4d4d4d" stroke-width="1.3"/>
<text x="830.1" y="255.35" text-anchor="middle" class="tk" style="font-size:10.2px">1</text>
<line x1="860.02" y1="282.6" x2="860.02" y2="299" stroke="#ffffff" stroke-width="1.6" opacity="0.8"/>
<rect x="850.32" y="267.3" width="22" height="16.8" rx="2.6" fill="#000" opacity="0.28"/>
<rect x="849.02" y="265.8" width="22" height="16.8" rx="2.6" fill="url(#lbl)" stroke="#4d4d4d" stroke-width="1.3"/>
<text x="860.82" y="277.55" text-anchor="middle" class="tk" style="font-size:10.2px">0</text>
<line x1="890.74" y1="282.6" x2="890.74" y2="299" stroke="#ffffff" stroke-width="1.6" opacity="0.8"/>
<rect x="881.04" y="267.3" width="22" height="16.8" rx="2.6" fill="#000" opacity="0.28"/>
<rect x="879.74" y="265.8" width="22" height="16.8" rx="2.6" fill="url(#lbl)" stroke="#4d4d4d" stroke-width="1.3"/>
<text x="891.54" y="277.55" text-anchor="middle" class="tk" style="font-size:10.2px">0</text>
<line x1="921.46" y1="260.4" x2="921.46" y2="278" stroke="#ffffff" stroke-width="1.6" opacity="0.8"/>
<rect x="911.76" y="245.1" width="22" height="16.8" rx="2.6" fill="#000" opacity="0.28"/>
<rect x="910.46" y="243.6" width="22" height="16.8" rx="2.6" fill="url(#lbl)" stroke="#4d4d4d" stroke-width="1.3"/>
<text x="922.26" y="255.35" text-anchor="middle" class="tk" style="font-size:10.2px">1</text>
<line x1="952.18" y1="260.4" x2="952.18" y2="278" stroke="#ffffff" stroke-width="1.6" opacity="0.8"/>
<rect x="942.48" y="245.1" width="22" height="16.8" rx="2.6" fill="#000" opacity="0.28"/>
<rect x="941.18" y="243.6" width="22" height="16.8" rx="2.6" fill="url(#lbl)" stroke="#4d4d4d" stroke-width="1.3"/>
<text x="952.98" y="255.35" text-anchor="middle" class="tk" style="font-size:10.2px">1</text>
<text x="717.3" y="120.3" text-anchor="middle" class="ct" textLength="327.5" lengthAdjust="spacingAndGlyphs">Графік розподілу кількості чеків за сумами реалізацій</text>
<text x="736" y="333.2" text-anchor="middle" class="at" textLength="78" lengthAdjust="spacingAndGlyphs">Сума реалізації</text>
<text transform="translate(462.5,218.5) rotate(-90)" text-anchor="middle" class="at" textLength="46.5" lengthAdjust="spacingAndGlyphs">Кількість</text></g>
<g><rect x="516.1" y="376.8" width="463.1" height="174" fill="#f0f0f0"/>
<line x1="516.1" y1="551.6" x2="979.2" y2="551.6" stroke="#d3d3d3" stroke-width="1.4"/>
<line x1="516.1" y1="520" x2="979.2" y2="520" stroke="#d3d3d3" stroke-width="1.4"/>
<line x1="516.1" y1="488.4" x2="979.2" y2="488.4" stroke="#d3d3d3" stroke-width="1.4"/>
<line x1="516.1" y1="456.8" x2="979.2" y2="456.8" stroke="#d3d3d3" stroke-width="1.4"/>
<line x1="516.1" y1="425.2" x2="979.2" y2="425.2" stroke="#d3d3d3" stroke-width="1.4"/>
<line x1="516.1" y1="393.6" x2="979.2" y2="393.6" stroke="#d3d3d3" stroke-width="1.4"/>
<line x1="565.7" y1="376.8" x2="565.7" y2="550.8" stroke="#d3d3d3" stroke-width="1.4"/>
<line x1="626.06" y1="376.8" x2="626.06" y2="550.8" stroke="#d3d3d3" stroke-width="1.4"/>
<line x1="686.42" y1="376.8" x2="686.42" y2="550.8" stroke="#d3d3d3" stroke-width="1.4"/>
<line x1="746.78" y1="376.8" x2="746.78" y2="550.8" stroke="#d3d3d3" stroke-width="1.4"/>
<line x1="807.14" y1="376.8" x2="807.14" y2="550.8" stroke="#d3d3d3" stroke-width="1.4"/>
<line x1="867.5" y1="376.8" x2="867.5" y2="550.8" stroke="#d3d3d3" stroke-width="1.4"/>
<line x1="927.86" y1="376.8" x2="927.86" y2="550.8" stroke="#d3d3d3" stroke-width="1.4"/>
<polyline points="515.1,550.8 515.1,375.6 980.2,375.6" fill="none" stroke="#ffffff" stroke-width="1.2" opacity="0.9"/>
<polyline points="516.1,550.8 516.1,376.8 979.2,376.8 979.2,550.8" fill="none" stroke="#4a4a4a" stroke-width="1.3"/>
<polygon points="507.4,559.5 516.1,550.8 516.1,376.8 507.4,385.5" fill="#ffff80" stroke="#2a2a00" stroke-width="0.6"/>
<line x1="507.9" y1="560.3" x2="515.6" y2="552.6" stroke="#d9d38a" stroke-width="0.7"/>
<line x1="507.9" y1="528.7" x2="515.6" y2="521" stroke="#d9d38a" stroke-width="0.7"/>
<line x1="507.9" y1="497.1" x2="515.6" y2="489.4" stroke="#d9d38a" stroke-width="0.7"/>
<line x1="507.9" y1="465.5" x2="515.6" y2="457.8" stroke="#d9d38a" stroke-width="0.7"/>
<line x1="507.9" y1="433.9" x2="515.6" y2="426.2" stroke="#d9d38a" stroke-width="0.7"/>
<line x1="507.9" y1="402.3" x2="515.6" y2="394.6" stroke="#d9d38a" stroke-width="0.7"/>
<polygon points="507.4,559.5 516.1,550.8 979.2,550.8 970.5,559.5" fill="#ffffff" stroke="#202020" stroke-width="0.9"/>
<polygon points="517.6,559.5 517.6,554.14 526.3,545.44 547.1,545.44 547.1,550.8 538.4,559.5" fill="none" stroke="#ffffff" stroke-width="3" stroke-linejoin="round" opacity="0.75"/>
<polygon points="547.81,559.5 547.81,486.07 556.51,477.37 577.31,477.37 577.31,550.8 568.61,559.5" fill="none" stroke="#ffffff" stroke-width="3" stroke-linejoin="round" opacity="0.75"/>
<polygon points="578.02,559.5 578.02,544.6 586.72,535.9 607.52,535.9 607.52,550.8 598.82,559.5" fill="none" stroke="#ffffff" stroke-width="3" stroke-linejoin="round" opacity="0.75"/>
<polygon points="608.23,559.5 608.23,536.33 616.93,527.63 637.73,527.63 637.73,550.8 629.03,559.5" fill="none" stroke="#ffffff" stroke-width="3" stroke-linejoin="round" opacity="0.75"/>
<polygon points="638.44,559.5 638.44,559.5 647.14,550.8 667.94,550.8 667.94,550.8 659.24,559.5" fill="none" stroke="#ffffff" stroke-width="3" stroke-linejoin="round" opacity="0.75"/>
<polygon points="668.65,559.5 668.65,419.11 677.35,410.41 698.15,410.41 698.15,550.8 689.45,559.5" fill="none" stroke="#ffffff" stroke-width="3" stroke-linejoin="round" opacity="0.75"/>
<polygon points="698.86,559.5 698.86,521.39 707.56,512.69 728.36,512.69 728.36,550.8 719.66,559.5" fill="none" stroke="#ffffff" stroke-width="3" stroke-linejoin="round" opacity="0.75"/>
<polygon points="729.07,559.5 729.07,559.5 737.77,550.8 758.57,550.8 758.57,550.8 749.87,559.5" fill="none" stroke="#ffffff" stroke-width="3" stroke-linejoin="round" opacity="0.75"/>
<polygon points="759.28,559.5 759.28,559.5 767.98,550.8 788.78,550.8 788.78,550.8 780.08,559.5" fill="none" stroke="#ffffff" stroke-width="3" stroke-linejoin="round" opacity="0.75"/>
<polygon points="789.49,559.5 789.49,500.08 798.19,491.38 818.99,491.38 818.99,550.8 810.29,559.5" fill="none" stroke="#ffffff" stroke-width="3" stroke-linejoin="round" opacity="0.75"/>
<polygon points="819.7,559.5 819.7,493.72 828.4,485.02 849.2,485.02 849.2,550.8 840.5,559.5" fill="none" stroke="#ffffff" stroke-width="3" stroke-linejoin="round" opacity="0.75"/>
<polygon points="849.91,559.5 849.91,559.5 858.61,550.8 879.41,550.8 879.41,550.8 870.71,559.5" fill="none" stroke="#ffffff" stroke-width="3" stroke-linejoin="round" opacity="0.75"/>
<polygon points="880.12,559.5 880.12,559.5 888.82,550.8 909.62,550.8 909.62,550.8 900.92,559.5" fill="none" stroke="#ffffff" stroke-width="3" stroke-linejoin="round" opacity="0.75"/>
<polygon points="910.33,559.5 910.33,474.64 919.03,465.94 939.83,465.94 939.83,550.8 931.13,559.5" fill="none" stroke="#ffffff" stroke-width="3" stroke-linejoin="round" opacity="0.75"/>
<polygon points="940.54,559.5 940.54,465.1 949.24,456.4 970.04,456.4 970.04,550.8 961.34,559.5" fill="none" stroke="#ffffff" stroke-width="3" stroke-linejoin="round" opacity="0.75"/>
<polygon points="538.4,554.14 547.1,545.44 547.1,550.8 538.4,559.5" fill="url(#c2s)" stroke="#000a09" stroke-width="1.25" stroke-linejoin="round"/>
<polygon points="517.6,554.14 526.3,545.44 547.1,545.44 538.4,554.14" fill="url(#c2t)" stroke="#000a09" stroke-width="1.25" stroke-linejoin="round"/>
<rect x="517.6" y="554.14" width="20.8" height="5.36" fill="#3a7f7b" stroke="#000a09" stroke-width="1.35" stroke-linejoin="round"/>
<polygon points="568.61,486.07 577.31,477.37 577.31,550.8 568.61,559.5" fill="url(#c2s)" stroke="#000a09" stroke-width="1.25" stroke-linejoin="round"/>
<polygon points="547.81,486.07 556.51,477.37 577.31,477.37 568.61,486.07" fill="url(#c2t)" stroke="#000a09" stroke-width="1.25" stroke-linejoin="round"/>
<rect x="547.81" y="486.07" width="20.8" height="73.43" fill="#3a7f7b" stroke="#000a09" stroke-width="1.35" stroke-linejoin="round"/>
<polygon points="598.82,544.6 607.52,535.9 607.52,550.8 598.82,559.5" fill="url(#c2s)" stroke="#000a09" stroke-width="1.25" stroke-linejoin="round"/>
<polygon points="578.02,544.6 586.72,535.9 607.52,535.9 598.82,544.6" fill="url(#c2t)" stroke="#000a09" stroke-width="1.25" stroke-linejoin="round"/>
<rect x="578.02" y="544.6" width="20.8" height="14.9" fill="#3a7f7b" stroke="#000a09" stroke-width="1.35" stroke-linejoin="round"/>
<polygon points="629.03,536.33 637.73,527.63 637.73,550.8 629.03,559.5" fill="url(#c2s)" stroke="#000a09" stroke-width="1.25" stroke-linejoin="round"/>
<polygon points="608.23,536.33 616.93,527.63 637.73,527.63 629.03,536.33" fill="url(#c2t)" stroke="#000a09" stroke-width="1.25" stroke-linejoin="round"/>
<rect x="608.23" y="536.33" width="20.8" height="23.17" fill="#3a7f7b" stroke="#000a09" stroke-width="1.35" stroke-linejoin="round"/>
<polygon points="659.24,559.5 667.94,550.8 667.94,550.8 659.24,559.5" fill="url(#c2s)" stroke="#000a09" stroke-width="1.25" stroke-linejoin="round"/>
<polygon points="638.44,559.5 647.14,550.8 667.94,550.8 659.24,559.5" fill="url(#c2t)" stroke="#000a09" stroke-width="1.25" stroke-linejoin="round"/>
<polygon points="689.45,419.11 698.15,410.41 698.15,550.8 689.45,559.5" fill="url(#c2s)" stroke="#000a09" stroke-width="1.25" stroke-linejoin="round"/>
<polygon points="668.65,419.11 677.35,410.41 698.15,410.41 689.45,419.11" fill="url(#c2t)" stroke="#000a09" stroke-width="1.25" stroke-linejoin="round"/>
<rect x="668.65" y="419.11" width="20.8" height="140.39" fill="#3a7f7b" stroke="#000a09" stroke-width="1.35" stroke-linejoin="round"/>
<polygon points="719.66,521.39 728.36,512.69 728.36,550.8 719.66,559.5" fill="url(#c2s)" stroke="#000a09" stroke-width="1.25" stroke-linejoin="round"/>
<polygon points="698.86,521.39 707.56,512.69 728.36,512.69 719.66,521.39" fill="url(#c2t)" stroke="#000a09" stroke-width="1.25" stroke-linejoin="round"/>
<rect x="698.86" y="521.39" width="20.8" height="38.11" fill="#3a7f7b" stroke="#000a09" stroke-width="1.35" stroke-linejoin="round"/>
<polygon points="749.87,559.5 758.57,550.8 758.57,550.8 749.87,559.5" fill="url(#c2s)" stroke="#000a09" stroke-width="1.25" stroke-linejoin="round"/>
<polygon points="729.07,559.5 737.77,550.8 758.57,550.8 749.87,559.5" fill="url(#c2t)" stroke="#000a09" stroke-width="1.25" stroke-linejoin="round"/>
<polygon points="780.08,559.5 788.78,550.8 788.78,550.8 780.08,559.5" fill="url(#c2s)" stroke="#000a09" stroke-width="1.25" stroke-linejoin="round"/>
<polygon points="759.28,559.5 767.98,550.8 788.78,550.8 780.08,559.5" fill="url(#c2t)" stroke="#000a09" stroke-width="1.25" stroke-linejoin="round"/>
<polygon points="810.29,500.08 818.99,491.38 818.99,550.8 810.29,559.5" fill="url(#c2s)" stroke="#000a09" stroke-width="1.25" stroke-linejoin="round"/>
<polygon points="789.49,500.08 798.19,491.38 818.99,491.38 810.29,500.08" fill="url(#c2t)" stroke="#000a09" stroke-width="1.25" stroke-linejoin="round"/>
<rect x="789.49" y="500.08" width="20.8" height="59.42" fill="#3a7f7b" stroke="#000a09" stroke-width="1.35" stroke-linejoin="round"/>
<polygon points="840.5,493.72 849.2,485.02 849.2,550.8 840.5,559.5" fill="url(#c2s)" stroke="#000a09" stroke-width="1.25" stroke-linejoin="round"/>
<polygon points="819.7,493.72 828.4,485.02 849.2,485.02 840.5,493.72" fill="url(#c2t)" stroke="#000a09" stroke-width="1.25" stroke-linejoin="round"/>
<rect x="819.7" y="493.72" width="20.8" height="65.78" fill="#3a7f7b" stroke="#000a09" stroke-width="1.35" stroke-linejoin="round"/>
<polygon points="870.71,559.5 879.41,550.8 879.41,550.8 870.71,559.5" fill="url(#c2s)" stroke="#000a09" stroke-width="1.25" stroke-linejoin="round"/>
<polygon points="849.91,559.5 858.61,550.8 879.41,550.8 870.71,559.5" fill="url(#c2t)" stroke="#000a09" stroke-width="1.25" stroke-linejoin="round"/>
<polygon points="900.92,559.5 909.62,550.8 909.62,550.8 900.92,559.5" fill="url(#c2s)" stroke="#000a09" stroke-width="1.25" stroke-linejoin="round"/>
<polygon points="880.12,559.5 888.82,550.8 909.62,550.8 900.92,559.5" fill="url(#c2t)" stroke="#000a09" stroke-width="1.25" stroke-linejoin="round"/>
<polygon points="931.13,474.64 939.83,465.94 939.83,550.8 931.13,559.5" fill="url(#c2s)" stroke="#000a09" stroke-width="1.25" stroke-linejoin="round"/>
<polygon points="910.33,474.64 919.03,465.94 939.83,465.94 931.13,474.64" fill="url(#c2t)" stroke="#000a09" stroke-width="1.25" stroke-linejoin="round"/>
<rect x="910.33" y="474.64" width="20.8" height="84.86" fill="#3a7f7b" stroke="#000a09" stroke-width="1.35" stroke-linejoin="round"/>
<polygon points="961.34,465.1 970.04,456.4 970.04,550.8 961.34,559.5" fill="url(#c2s)" stroke="#000a09" stroke-width="1.25" stroke-linejoin="round"/>
<polygon points="940.54,465.1 949.24,456.4 970.04,456.4 961.34,465.1" fill="url(#c2t)" stroke="#000a09" stroke-width="1.25" stroke-linejoin="round"/>
<rect x="940.54" y="465.1" width="20.8" height="94.4" fill="#3a7f7b" stroke="#000a09" stroke-width="1.35" stroke-linejoin="round"/>
<line x1="506.4" y1="385.5" x2="506.4" y2="561.8" stroke="#000" stroke-width="1.8"/>
<line x1="505.5" y1="561.05" x2="970.5" y2="561.05" stroke="#000" stroke-width="2"/>
<line x1="501.4" y1="560.3" x2="505.4" y2="560.3" stroke="#a8a8a8" stroke-width="1.1"/>
<text x="499.5" y="564.2" text-anchor="end" class="tk">0</text>
<line x1="501.4" y1="528.7" x2="505.4" y2="528.7" stroke="#a8a8a8" stroke-width="1.1"/>
<text x="499.5" y="532.6" text-anchor="end" class="tk">500</text>
<line x1="501.4" y1="497.1" x2="505.4" y2="497.1" stroke="#a8a8a8" stroke-width="1.1"/>
<text x="499.5" y="501" text-anchor="end" class="tk">1 000</text>
<line x1="501.4" y1="465.5" x2="505.4" y2="465.5" stroke="#a8a8a8" stroke-width="1.1"/>
<text x="499.5" y="469.4" text-anchor="end" class="tk">1 500</text>
<line x1="501.4" y1="433.9" x2="505.4" y2="433.9" stroke="#a8a8a8" stroke-width="1.1"/>
<text x="499.5" y="437.8" text-anchor="end" class="tk">2 000</text>
<line x1="501.4" y1="402.3" x2="505.4" y2="402.3" stroke="#a8a8a8" stroke-width="1.1"/>
<text x="499.5" y="406.2" text-anchor="end" class="tk">2 500</text>
<line x1="502.9" y1="552.4" x2="505.4" y2="552.4" stroke="#fbfbfb" stroke-width="1.1"/>
<line x1="502.9" y1="544.5" x2="505.4" y2="544.5" stroke="#fbfbfb" stroke-width="1.1"/>
<line x1="502.9" y1="536.6" x2="505.4" y2="536.6" stroke="#fbfbfb" stroke-width="1.1"/>
<line x1="502.9" y1="520.8" x2="505.4" y2="520.8" stroke="#fbfbfb" stroke-width="1.1"/>
<line x1="502.9" y1="512.9" x2="505.4" y2="512.9" stroke="#fbfbfb" stroke-width="1.1"/>
<line x1="502.9" y1="505" x2="505.4" y2="505" stroke="#fbfbfb" stroke-width="1.1"/>
<line x1="502.9" y1="489.2" x2="505.4" y2="489.2" stroke="#fbfbfb" stroke-width="1.1"/>
<line x1="502.9" y1="481.3" x2="505.4" y2="481.3" stroke="#fbfbfb" stroke-width="1.1"/>
<line x1="502.9" y1="473.4" x2="505.4" y2="473.4" stroke="#fbfbfb" stroke-width="1.1"/>
<line x1="502.9" y1="457.6" x2="505.4" y2="457.6" stroke="#fbfbfb" stroke-width="1.1"/>
<line x1="502.9" y1="449.7" x2="505.4" y2="449.7" stroke="#fbfbfb" stroke-width="1.1"/>
<line x1="502.9" y1="441.8" x2="505.4" y2="441.8" stroke="#fbfbfb" stroke-width="1.1"/>
<line x1="502.9" y1="426" x2="505.4" y2="426" stroke="#fbfbfb" stroke-width="1.1"/>
<line x1="502.9" y1="418.1" x2="505.4" y2="418.1" stroke="#fbfbfb" stroke-width="1.1"/>
<line x1="502.9" y1="410.2" x2="505.4" y2="410.2" stroke="#fbfbfb" stroke-width="1.1"/>
<line x1="502.9" y1="394.4" x2="505.4" y2="394.4" stroke="#fbfbfb" stroke-width="1.1"/>
<line x1="557.8" y1="561.5" x2="557.8" y2="566" stroke="#8a8a8a" stroke-width="1"/>
<text x="558.7" y="576.6" text-anchor="middle" class="tk">200</text>
<line x1="618.16" y1="561.5" x2="618.16" y2="566" stroke="#8a8a8a" stroke-width="1"/>
<text x="619.06" y="576.6" text-anchor="middle" class="tk">400</text>
<line x1="678.52" y1="561.5" x2="678.52" y2="566" stroke="#8a8a8a" stroke-width="1"/>
<text x="679.42" y="576.6" text-anchor="middle" class="tk">600</text>
<line x1="738.88" y1="561.5" x2="738.88" y2="566" stroke="#8a8a8a" stroke-width="1"/>
<text x="739.78" y="576.6" text-anchor="middle" class="tk">800</text>
<line x1="799.24" y1="561.5" x2="799.24" y2="566" stroke="#8a8a8a" stroke-width="1"/>
<text x="800.14" y="576.6" text-anchor="middle" class="tk">1 000</text>
<line x1="859.6" y1="561.5" x2="859.6" y2="566" stroke="#8a8a8a" stroke-width="1"/>
<text x="860.5" y="576.6" text-anchor="middle" class="tk">1 200</text>
<line x1="919.96" y1="561.5" x2="919.96" y2="566" stroke="#8a8a8a" stroke-width="1"/>
<text x="920.86" y="576.6" text-anchor="middle" class="tk">1 400</text>
<line x1="512.53" y1="561.5" x2="512.53" y2="564" stroke="#9a9a9a" stroke-width="1"/>
<line x1="527.62" y1="561.5" x2="527.62" y2="564" stroke="#9a9a9a" stroke-width="1"/>
<line x1="542.71" y1="561.5" x2="542.71" y2="564" stroke="#9a9a9a" stroke-width="1"/>
<line x1="572.89" y1="561.5" x2="572.89" y2="564" stroke="#9a9a9a" stroke-width="1"/>
<line x1="587.98" y1="561.5" x2="587.98" y2="564" stroke="#9a9a9a" stroke-width="1"/>
<line x1="603.07" y1="561.5" x2="603.07" y2="564" stroke="#9a9a9a" stroke-width="1"/>
<line x1="633.25" y1="561.5" x2="633.25" y2="564" stroke="#9a9a9a" stroke-width="1"/>
<line x1="648.34" y1="561.5" x2="648.34" y2="564" stroke="#9a9a9a" stroke-width="1"/>
<line x1="663.43" y1="561.5" x2="663.43" y2="564" stroke="#9a9a9a" stroke-width="1"/>
<line x1="693.61" y1="561.5" x2="693.61" y2="564" stroke="#9a9a9a" stroke-width="1"/>
<line x1="708.7" y1="561.5" x2="708.7" y2="564" stroke="#9a9a9a" stroke-width="1"/>
<line x1="723.79" y1="561.5" x2="723.79" y2="564" stroke="#9a9a9a" stroke-width="1"/>
<line x1="753.97" y1="561.5" x2="753.97" y2="564" stroke="#9a9a9a" stroke-width="1"/>
<line x1="769.06" y1="561.5" x2="769.06" y2="564" stroke="#9a9a9a" stroke-width="1"/>
<line x1="784.15" y1="561.5" x2="784.15" y2="564" stroke="#9a9a9a" stroke-width="1"/>
<line x1="814.33" y1="561.5" x2="814.33" y2="564" stroke="#9a9a9a" stroke-width="1"/>
<line x1="829.42" y1="561.5" x2="829.42" y2="564" stroke="#9a9a9a" stroke-width="1"/>
<line x1="844.51" y1="561.5" x2="844.51" y2="564" stroke="#9a9a9a" stroke-width="1"/>
<line x1="874.69" y1="561.5" x2="874.69" y2="564" stroke="#9a9a9a" stroke-width="1"/>
<line x1="889.78" y1="561.5" x2="889.78" y2="564" stroke="#9a9a9a" stroke-width="1"/>
<line x1="904.87" y1="561.5" x2="904.87" y2="564" stroke="#9a9a9a" stroke-width="1"/>
<line x1="935.05" y1="561.5" x2="935.05" y2="564" stroke="#9a9a9a" stroke-width="1"/>
<line x1="950.14" y1="561.5" x2="950.14" y2="564" stroke="#9a9a9a" stroke-width="1"/>
<line x1="965.23" y1="561.5" x2="965.23" y2="564" stroke="#9a9a9a" stroke-width="1"/>
<line x1="531" y1="533.04" x2="531" y2="550.29" stroke="#ffffff" stroke-width="1.6" opacity="0.8"/>
<rect x="515.65" y="517.74" width="33.3" height="16.8" rx="2.6" fill="#000" opacity="0.28"/>
<rect x="514.35" y="516.24" width="33.3" height="16.8" rx="2.6" fill="url(#lbl)" stroke="#4d4d4d" stroke-width="1.3"/>
<text x="531.8" y="527.99" text-anchor="middle" class="tk" style="font-size:10.2px">100</text>
<line x1="561.21" y1="464.97" x2="561.21" y2="482.22" stroke="#ffffff" stroke-width="1.6" opacity="0.8"/>
<rect x="534.81" y="449.67" width="55.4" height="16.8" rx="2.6" fill="#000" opacity="0.28"/>
<rect x="533.51" y="448.17" width="55.4" height="16.8" rx="2.6" fill="url(#lbl)" stroke="#4d4d4d" stroke-width="1.3"/>
<text x="562.01" y="459.92" text-anchor="middle" class="tk" style="font-size:10.2px">1 170,24</text>
<line x1="591.42" y1="523.5" x2="591.42" y2="540.75" stroke="#ffffff" stroke-width="1.6" opacity="0.8"/>
<rect x="576.07" y="508.2" width="33.3" height="16.8" rx="2.6" fill="#000" opacity="0.28"/>
<rect x="574.77" y="506.7" width="33.3" height="16.8" rx="2.6" fill="url(#lbl)" stroke="#4d4d4d" stroke-width="1.3"/>
<text x="592.22" y="518.45" text-anchor="middle" class="tk" style="font-size:10.2px">250</text>
<line x1="651.84" y1="539.4" x2="651.84" y2="555.65" stroke="#ffffff" stroke-width="1.6" opacity="0.8"/>
<rect x="642.14" y="524.1" width="22" height="16.8" rx="2.6" fill="#000" opacity="0.28"/>
<rect x="640.84" y="522.6" width="22" height="16.8" rx="2.6" fill="url(#lbl)" stroke="#4d4d4d" stroke-width="1.3"/>
<text x="652.64" y="534.35" text-anchor="middle" class="tk" style="font-size:10.2px">0</text>
<line x1="682.05" y1="398.01" x2="682.05" y2="415.26" stroke="#ffffff" stroke-width="1.6" opacity="0.8"/>
<rect x="655.65" y="382.71" width="55.4" height="16.8" rx="2.6" fill="#000" opacity="0.28"/>
<rect x="654.35" y="381.21" width="55.4" height="16.8" rx="2.6" fill="url(#lbl)" stroke="#4d4d4d" stroke-width="1.3"/>
<text x="682.85" y="392.96" text-anchor="middle" class="tk" style="font-size:10.2px">2 223,16</text>
<line x1="712.26" y1="500.29" x2="712.26" y2="517.54" stroke="#ffffff" stroke-width="1.6" opacity="0.8"/>
<rect x="696.91" y="484.99" width="33.3" height="16.8" rx="2.6" fill="#000" opacity="0.28"/>
<rect x="695.61" y="483.49" width="33.3" height="16.8" rx="2.6" fill="url(#lbl)" stroke="#4d4d4d" stroke-width="1.3"/>
<text x="713.06" y="495.24" text-anchor="middle" class="tk" style="font-size:10.2px">615</text>
<line x1="742.47" y1="539.4" x2="742.47" y2="555.65" stroke="#ffffff" stroke-width="1.6" opacity="0.8"/>
<rect x="732.77" y="524.1" width="22" height="16.8" rx="2.6" fill="#000" opacity="0.28"/>
<rect x="731.47" y="522.6" width="22" height="16.8" rx="2.6" fill="url(#lbl)" stroke="#4d4d4d" stroke-width="1.3"/>
<text x="743.27" y="534.35" text-anchor="middle" class="tk" style="font-size:10.2px">0</text>
<line x1="772.68" y1="539.4" x2="772.68" y2="555.65" stroke="#ffffff" stroke-width="1.6" opacity="0.8"/>
<rect x="762.98" y="524.1" width="22" height="16.8" rx="2.6" fill="#000" opacity="0.28"/>
<rect x="761.68" y="522.6" width="22" height="16.8" rx="2.6" fill="url(#lbl)" stroke="#4d4d4d" stroke-width="1.3"/>
<text x="773.48" y="534.35" text-anchor="middle" class="tk" style="font-size:10.2px">0</text>
<line x1="802.89" y1="478.98" x2="802.89" y2="496.23" stroke="#ffffff" stroke-width="1.6" opacity="0.8"/>
<rect x="787.54" y="463.68" width="33.3" height="16.8" rx="2.6" fill="#000" opacity="0.28"/>
<rect x="786.24" y="462.18" width="33.3" height="16.8" rx="2.6" fill="url(#lbl)" stroke="#4d4d4d" stroke-width="1.3"/>
<text x="803.69" y="473.93" text-anchor="middle" class="tk" style="font-size:10.2px">950</text>
<line x1="863.31" y1="539.4" x2="863.31" y2="555.65" stroke="#ffffff" stroke-width="1.6" opacity="0.8"/>
<rect x="853.61" y="524.1" width="22" height="16.8" rx="2.6" fill="#000" opacity="0.28"/>
<rect x="852.31" y="522.6" width="22" height="16.8" rx="2.6" fill="url(#lbl)" stroke="#4d4d4d" stroke-width="1.3"/>
<text x="864.11" y="534.35" text-anchor="middle" class="tk" style="font-size:10.2px">0</text>
<line x1="893.52" y1="539.4" x2="893.52" y2="555.65" stroke="#ffffff" stroke-width="1.6" opacity="0.8"/>
<rect x="883.82" y="524.1" width="22" height="16.8" rx="2.6" fill="#000" opacity="0.28"/>
<rect x="882.52" y="522.6" width="22" height="16.8" rx="2.6" fill="url(#lbl)" stroke="#4d4d4d" stroke-width="1.3"/>
<text x="894.32" y="534.35" text-anchor="middle" class="tk" style="font-size:10.2px">0</text>
<line x1="923.73" y1="453.54" x2="923.73" y2="470.79" stroke="#ffffff" stroke-width="1.6" opacity="0.8"/>
<rect x="904.78" y="438.24" width="40.5" height="16.8" rx="2.6" fill="#000" opacity="0.28"/>
<rect x="903.48" y="436.74" width="40.5" height="16.8" rx="2.6" fill="url(#lbl)" stroke="#4d4d4d" stroke-width="1.3"/>
<text x="924.53" y="448.49" text-anchor="middle" class="tk" style="font-size:10.2px">1 350</text>
<text x="717.5" y="369.6" text-anchor="middle" class="ct" textLength="297" lengthAdjust="spacingAndGlyphs">Графік розподілу сум чеків за сумами реалізацій</text>
<text x="742" y="590.2" text-anchor="middle" class="at" textLength="78" lengthAdjust="spacingAndGlyphs">Сума реалізації</text>
<text transform="translate(461.9,470) rotate(-90)" text-anchor="middle" class="at" textLength="100.6" lengthAdjust="spacingAndGlyphs">Загальна сума чеків</text></g>
</svg>
<!-- checkboxes -->
<svg style="position:absolute;left:447px;top:602px" width="160" height="18" viewBox="0 0 160 18">
 <rect x="1" y="1.6" width="12.8" height="12.8" rx="2.4" fill="#3f8cf3"/>
 <path d="M4 8.2l2.7 2.8 4.4-5.4" fill="none" stroke="#fff" stroke-width="1.5" stroke-linecap="round" stroke-linejoin="round"/>
 <rect x="125" y="1.6" width="12.8" height="12.8" rx="2.4" fill="#3f8cf3"/>
 <path d="M128 8.2l2.7 2.8 4.4-5.4" fill="none" stroke="#fff" stroke-width="1.5" stroke-linecap="round" stroke-linejoin="round"/>
 <rect x="141" y="1.4" width="14.4" height="13.6" fill="none" stroke="#555" stroke-width="0.7" stroke-dasharray="1 1" opacity="0.8"/>
</svg>
<span style="top:604.8px;font-size:10.5px;line-height:13px;letter-spacing:-0.233px;left:463.8px;">Підписи на графіку</span>
<span style="top:604.8px;font-size:10.5px;line-height:13px;letter-spacing:-0.611px;left:589.2px;">3D</span>
</body></html>
